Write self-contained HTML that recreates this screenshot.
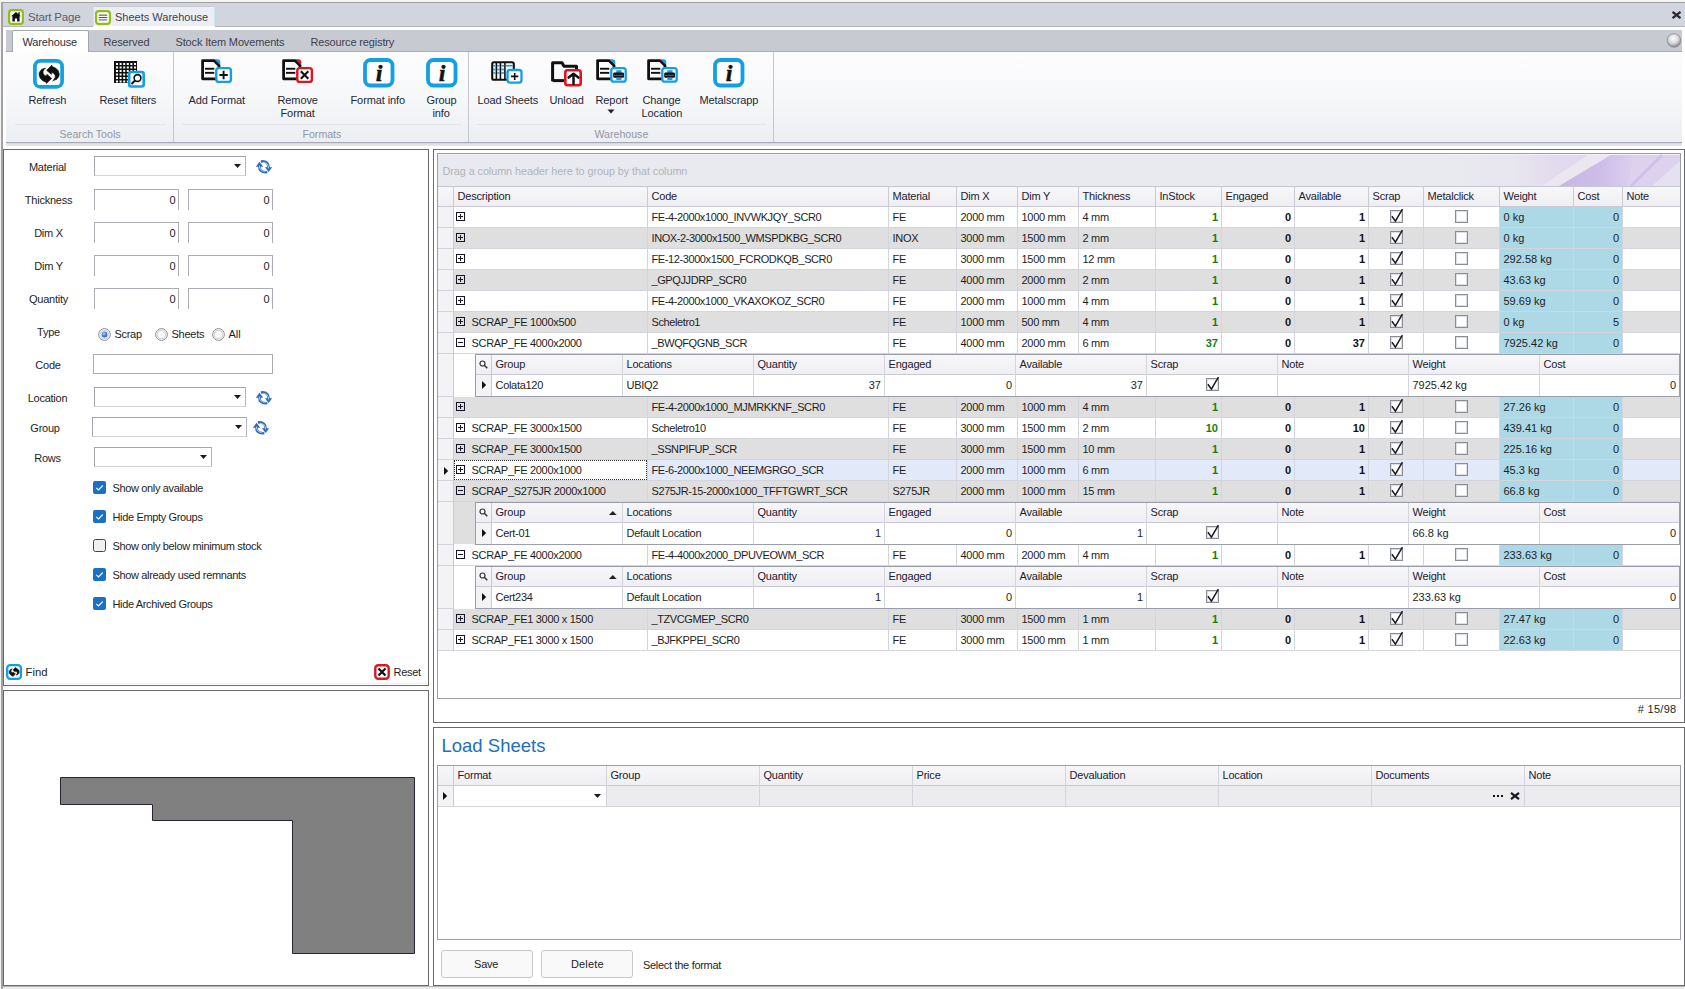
<!DOCTYPE html>
<html><head><meta charset="utf-8"><title>Sheets Warehouse</title>
<style>
html,body{margin:0;padding:0;}
body{width:1685px;height:989px;position:relative;overflow:hidden;background:#fff;font-family:"Liberation Sans",sans-serif;}
.r{position:absolute;}
.t{position:absolute;white-space:pre;}
svg.r{overflow:visible;}
</style></head><body>
<div class="r" style="left:0px;top:0px;width:1685px;height:989px;background:#ffffff;"></div>
<div class="r" style="left:0px;top:0px;width:1685px;height:2px;background:#f4f4f4;"></div>
<div class="r" style="left:0px;top:0px;width:2px;height:989px;background:#f4f4f4;"></div>
<div class="r" style="left:1px;top:2px;width:1685px;height:1px;background:#a0a0a0;"></div>
<div class="r" style="left:2px;top:2px;width:1px;height:988px;background:#a0a0a0;"></div>
<div class="r" style="left:1px;top:2px;width:1px;height:988px;background:#a4a4a4;"></div>
<div class="r" style="left:3px;top:3px;width:1682px;height:23px;background:#d2d5dd;"></div>
<div class="r" style="left:3px;top:26px;width:90px;height:1px;background:#b3b6c0;"></div>
<div class="r" style="left:215px;top:26px;width:1471px;height:1px;background:#b3b6c0;"></div>
<svg class="r" style="left:8px;top:9px;" width="16" height="16" viewBox="0 0 16 16"><rect x="1.1" y="1.1" width="13.8" height="13.8" rx="2.6" fill="#fff" stroke="#90be12" stroke-width="2.2"/><path d="M3.1 7.2 L8 3 L12.9 7.2 Z" fill="#111"/><path d="M4.4 6.5 L11.6 6.5 L11.6 12.4 L9.1 12.4 L9.1 9.6 L6.9 9.6 L6.9 12.4 L4.4 12.4 Z" fill="#111"/><rect x="10.3" y="3.2" width="1.4" height="2.8" fill="#111"/></svg>
<div class="t" style="left:28px;top:10.59px;font-size:11.5px;line-height:13.213px;color:#5a5e68;letter-spacing:-0.2px;">Start Page</div>
<div class="r" style="left:93px;top:6px;width:122px;height:20px;background:#eceef3;border-top:1px solid #c9cdd6;border-left:1px solid #bfe8f0;border-right:1px solid #bfe8f0;box-sizing:border-box;border-radius:2px 2px 0 0;"></div>
<svg class="r" style="left:95px;top:10px;" width="16" height="15" viewBox="0 0 16 15"><rect x="1.1" y="1.1" width="13.8" height="12.8" rx="2.6" fill="#fff" stroke="#90be12" stroke-width="2.2"/><rect x="3.8" y="4.6" width="8.4" height="1.1" fill="#555"/><rect x="3.8" y="7" width="8.4" height="1.1" fill="#555"/><rect x="3.8" y="9.4" width="8.4" height="1.1" fill="#666"/></svg>
<div class="t" style="left:115px;top:11.04px;font-size:11px;line-height:12.639px;color:#3c4250;">Sheets Warehouse</div>
<svg class="r" style="left:1671px;top:11px;" width="11" height="8" viewBox="0 0 11 8"><path d="M1.5 0.8 L9.5 7.2 M9.5 0.8 L1.5 7.2" stroke="#2e2630" stroke-width="2.3"/></svg>
<div class="r" style="left:6px;top:30px;width:1676px;height:21px;background:#c8cad2;"></div>
<div class="r" style="left:6px;top:51px;width:1676px;height:1px;background:#a9acb6;"></div>
<div class="r" style="left:12px;top:30px;width:77px;height:22px;background:#ffffff;border-radius:2px 2px 0 0;border:1px solid #a2a6b2;border-bottom:none;box-sizing:border-box;"></div>
<div class="t" style="left:22.5px;top:36.05px;font-size:11px;line-height:12.639px;color:#2b3040;letter-spacing:-0.15px;">Warehouse</div>
<div class="t" style="left:103.5px;top:36.05px;font-size:11px;line-height:12.639px;color:#3b4150;letter-spacing:-0.15px;">Reserved</div>
<div class="t" style="left:175.5px;top:36.05px;font-size:11px;line-height:12.639px;color:#3b4150;letter-spacing:-0.15px;">Stock Item Movements</div>
<div class="t" style="left:310.5px;top:36.05px;font-size:11px;line-height:12.639px;color:#3b4150;letter-spacing:-0.15px;">Resource registry</div>
<svg class="r" style="left:1666px;top:33px;" width="16" height="15" viewBox="0 0 16 15"><defs><radialGradient id="bg1" cx="45%" cy="35%" r="60%"><stop offset="0" stop-color="#ffffff"/><stop offset="0.6" stop-color="#d8d8dc"/><stop offset="1" stop-color="#8e8e96"/></radialGradient></defs><circle cx="8" cy="7.5" r="6.8" fill="url(#bg1)" stroke="#8a8a92" stroke-width="0.8"/></svg>
<div class="r" style="left:6px;top:52px;width:1676px;height:90px;background:linear-gradient(#fdfdfe,#f6f7f9 55%,#eceef2);"></div>
<div class="r" style="left:6px;top:142px;width:1676px;height:1px;background:#a6aab6;"></div>
<div class="r" style="left:6px;top:143px;width:1676px;height:3px;background:linear-gradient(#d6d7dc,#eaebef);"></div>
<div class="r" style="left:173px;top:52px;width:1px;height:90px;background:#c4c7cf;"></div>
<div class="r" style="left:468px;top:52px;width:1px;height:90px;background:#c4c7cf;"></div>
<div class="r" style="left:773px;top:52px;width:1px;height:90px;background:#c4c7cf;"></div>
<div class="r" style="left:15px;top:124px;width:151px;height:1px;background:#e2e4ea;"></div>
<div class="r" style="left:182px;top:124px;width:279px;height:1px;background:#e2e4ea;"></div>
<div class="r" style="left:477px;top:124px;width:289px;height:1px;background:#e2e4ea;"></div>
<div class="t" style="left:59.5px;top:128.41px;font-size:10.6px;line-height:12.179px;color:#9096a4;">Search Tools</div>
<div class="t" style="left:302.5px;top:128.41px;font-size:10.6px;line-height:12.179px;color:#9096a4;">Formats</div>
<div class="t" style="left:594.5px;top:128.41px;font-size:10.6px;line-height:12.179px;color:#9096a4;">Warehouse</div>
<div class="t" style="left:28.5px;top:94.05px;font-size:11px;line-height:12.639px;color:#222838;letter-spacing:-0.1px;">Refresh</div>
<div class="t" style="left:99.5px;top:94.05px;font-size:11px;line-height:12.639px;color:#222838;letter-spacing:-0.1px;">Reset filters</div>
<div class="t" style="left:188.5px;top:94.05px;font-size:11px;line-height:12.639px;color:#222838;letter-spacing:-0.1px;">Add Format</div>
<div class="t" style="left:277.5px;top:94.05px;font-size:11px;line-height:12.639px;color:#222838;letter-spacing:-0.1px;">Remove</div>
<div class="t" style="left:280.5px;top:107.05px;font-size:11px;line-height:12.639px;color:#222838;letter-spacing:-0.1px;">Format</div>
<div class="t" style="left:350.5px;top:94.05px;font-size:11px;line-height:12.639px;color:#222838;letter-spacing:-0.1px;">Format info</div>
<div class="t" style="left:426.5px;top:94.05px;font-size:11px;line-height:12.639px;color:#222838;letter-spacing:-0.1px;">Group</div>
<div class="t" style="left:432.5px;top:107.05px;font-size:11px;line-height:12.639px;color:#222838;letter-spacing:-0.1px;">info</div>
<div class="t" style="left:477.5px;top:94.05px;font-size:11px;line-height:12.639px;color:#222838;letter-spacing:-0.1px;">Load Sheets</div>
<div class="t" style="left:549.5px;top:94.05px;font-size:11px;line-height:12.639px;color:#222838;letter-spacing:-0.1px;">Unload</div>
<div class="t" style="left:595.5px;top:94.05px;font-size:11px;line-height:12.639px;color:#222838;letter-spacing:-0.1px;">Report</div>
<svg class="r" style="left:607px;top:109px;" width="8" height="5" viewBox="0 0 8 5"><path d="M0.5 0.5 L7.5 0.5 L4 4.5 Z" fill="#222"/></svg>
<div class="t" style="left:642.5px;top:94.05px;font-size:11px;line-height:12.639px;color:#222838;letter-spacing:-0.1px;">Change</div>
<div class="t" style="left:641.5px;top:107.05px;font-size:11px;line-height:12.639px;color:#222838;letter-spacing:-0.1px;">Location</div>
<div class="t" style="left:699.5px;top:94.05px;font-size:11px;line-height:12.639px;color:#222838;letter-spacing:-0.1px;">Metalscrapp</div>
<svg class="r" style="left:33px;top:59px;" width="32" height="31" viewBox="0 0 32 31"><rect x="1.9" y="1.9" width="27.2" height="26" rx="5.5" fill="#fff" stroke="#12a0e3" stroke-width="3.7"/><path d="M12.6 9.0 L8.7 10.3 L6.4 13.2 L6.0 15.8 L7.1 19.1 L9.7 21.7 L13.2 23.3 L13.4 24.6 L18.7 19.4 L13.9 15.2 L13.6 17.1 L11.6 16.5 L10.2 14.5 L10.0 12.6 L11.3 10.3 Z" fill="#111" stroke="#111" stroke-width="0.6" stroke-linejoin="round"/><path d="M12.6 9.0 L8.7 10.3 L6.4 13.2 L6.0 15.8 L7.1 19.1 L9.7 21.7 L13.2 23.3 L13.4 24.6 L18.7 19.4 L13.9 15.2 L13.6 17.1 L11.6 16.5 L10.2 14.5 L10.0 12.6 L11.3 10.3 Z" transform="rotate(180 16.15 15.35)" fill="#111" stroke="#111" stroke-width="0.6" stroke-linejoin="round"/></svg>
<svg class="r" style="left:114px;top:61px;" width="32" height="28" viewBox="0 0 32 28"><rect x="0" y="0" width="23" height="22" fill="#111"/><rect x="2.0" y="2.0" width="2" height="2" fill="#fff"/><rect x="2.0" y="5.5" width="2" height="2" fill="#fff"/><rect x="2.0" y="9.0" width="2" height="2" fill="#fff"/><rect x="2.0" y="12.5" width="2" height="2" fill="#fff"/><rect x="2.0" y="16.0" width="2" height="2" fill="#fff"/><rect x="2.0" y="19.5" width="2" height="2" fill="#fff"/><rect x="5.6" y="2.0" width="2" height="2" fill="#fff"/><rect x="5.6" y="5.5" width="2" height="2" fill="#fff"/><rect x="5.6" y="9.0" width="2" height="2" fill="#fff"/><rect x="5.6" y="12.5" width="2" height="2" fill="#fff"/><rect x="5.6" y="16.0" width="2" height="2" fill="#fff"/><rect x="5.6" y="19.5" width="2" height="2" fill="#fff"/><rect x="9.2" y="2.0" width="2" height="2" fill="#fff"/><rect x="9.2" y="5.5" width="2" height="2" fill="#fff"/><rect x="9.2" y="9.0" width="2" height="2" fill="#fff"/><rect x="9.2" y="12.5" width="2" height="2" fill="#fff"/><rect x="9.2" y="16.0" width="2" height="2" fill="#fff"/><rect x="9.2" y="19.5" width="2" height="2" fill="#fff"/><rect x="12.8" y="2.0" width="2" height="2" fill="#fff"/><rect x="12.8" y="5.5" width="2" height="2" fill="#fff"/><rect x="12.8" y="9.0" width="2" height="2" fill="#fff"/><rect x="12.8" y="12.5" width="2" height="2" fill="#fff"/><rect x="12.8" y="16.0" width="2" height="2" fill="#fff"/><rect x="12.8" y="19.5" width="2" height="2" fill="#fff"/><rect x="16.4" y="2.0" width="2" height="2" fill="#fff"/><rect x="16.4" y="5.5" width="2" height="2" fill="#fff"/><rect x="16.4" y="9.0" width="2" height="2" fill="#fff"/><rect x="16.4" y="12.5" width="2" height="2" fill="#fff"/><rect x="16.4" y="16.0" width="2" height="2" fill="#fff"/><rect x="16.4" y="19.5" width="2" height="2" fill="#fff"/><rect x="20.0" y="2.0" width="2" height="2" fill="#fff"/><rect x="20.0" y="5.5" width="2" height="2" fill="#fff"/><rect x="20.0" y="9.0" width="2" height="2" fill="#fff"/><rect x="20.0" y="12.5" width="2" height="2" fill="#fff"/><rect x="20.0" y="16.0" width="2" height="2" fill="#fff"/><rect x="20.0" y="19.5" width="2" height="2" fill="#fff"/><rect x="15.2" y="11" width="14.5" height="14.5" rx="2" fill="#fff" stroke="#12a0e3" stroke-width="2.6"/><circle cx="23.5" cy="17" r="3.4" fill="none" stroke="#111" stroke-width="1.6"/><path d="M21 19.5 L17.5 23" stroke="#111" stroke-width="2"/></svg>
<svg class="r" style="left:200px;top:58px;" width="33" height="26" viewBox="0 0 33 26"><path d="M2.6 2.6 L14 2.6 L19 7.6 L19 11 M2.6 2.6 L2.6 20.8 L16 20.8" fill="none" stroke="#111" stroke-width="2.8" stroke-linejoin="round" stroke-linecap="round"/><rect x="5" y="9.8" width="9.3" height="1.9" fill="#111"/><rect x="5" y="13.9" width="9.3" height="1.9" fill="#111"/><path d="M14.3 1.2 L17.5 1.2 Q20.2 1.4 20.3 4.2 L20.3 6.8 Z" fill="#12a0e3"/><rect x="16.3" y="10.1" width="14.6" height="13.8" rx="2.5" fill="#fff" stroke="#12a0e3" stroke-width="2.4"/><path d="M23.6 12.8 L23.6 21.2 M19.4 17 L27.8 17" stroke="#111" stroke-width="1.9"/></svg>
<svg class="r" style="left:281px;top:58px;" width="33" height="26" viewBox="0 0 33 26"><path d="M2.6 2.6 L14 2.6 L19 7.6 L19 11 M2.6 2.6 L2.6 20.8 L16 20.8" fill="none" stroke="#111" stroke-width="2.8" stroke-linejoin="round" stroke-linecap="round"/><rect x="5" y="9.8" width="9.3" height="1.9" fill="#111"/><rect x="5" y="13.9" width="9.3" height="1.9" fill="#111"/><path d="M14.3 1.2 L17.5 1.2 Q20.2 1.4 20.3 4.2 L20.3 6.8 Z" fill="#e0141e"/><rect x="16.3" y="10.1" width="14.6" height="13.8" rx="2.5" fill="#fff" stroke="#e0141e" stroke-width="2.4"/><path d="M19.8 13.3 L27.3 20.8 M27.3 13.3 L19.8 20.8" stroke="#111" stroke-width="2.1"/></svg>
<svg class="r" style="left:363px;top:58px;" width="32" height="30" viewBox="0 0 32 30"><rect x="2" y="2" width="27.5" height="25.5" rx="5.5" fill="#fff" stroke="#12a0e3" stroke-width="3.8"/><text x="16.2" y="22.8" text-anchor="middle" font-family="Liberation Serif" font-weight="bold" font-style="italic" font-size="22.5" fill="#111" stroke="#111" stroke-width="0.7">i</text></svg>
<svg class="r" style="left:426px;top:58px;" width="32" height="30" viewBox="0 0 32 30"><rect x="2" y="2" width="27.5" height="25.5" rx="5.5" fill="#fff" stroke="#12a0e3" stroke-width="3.8"/><text x="16.2" y="22.8" text-anchor="middle" font-family="Liberation Serif" font-weight="bold" font-style="italic" font-size="22.5" fill="#111" stroke="#111" stroke-width="0.7">i</text></svg>
<svg class="r" style="left:713px;top:58px;" width="32" height="30" viewBox="0 0 32 30"><rect x="2" y="2" width="27.5" height="25.5" rx="5.5" fill="#fff" stroke="#12a0e3" stroke-width="3.8"/><text x="16.2" y="22.8" text-anchor="middle" font-family="Liberation Serif" font-weight="bold" font-style="italic" font-size="22.5" fill="#111" stroke="#111" stroke-width="0.7">i</text></svg>
<svg class="r" style="left:491px;top:61px;" width="33" height="24" viewBox="0 0 33 24"><rect x="1.2" y="1.2" width="21.6" height="17.6" rx="1.8" fill="#fff" stroke="#111" stroke-width="2.1"/><rect x="4.6" y="1.5" width="1.6" height="17" fill="#111"/><rect x="8.6" y="1.5" width="1.6" height="17" fill="#111"/><rect x="13.1" y="1.5" width="1.6" height="17" fill="#111"/><rect x="2.2" y="3.9" width="2.4" height="1.6" fill="#1b9be0"/><rect x="6.2" y="3.9" width="2.4" height="1.6" fill="#1b9be0"/><rect x="10.2" y="3.9" width="2.9" height="1.6" fill="#1b9be0"/><rect x="2.2" y="7.7" width="2.4" height="1.6" fill="#1b9be0"/><rect x="6.2" y="7.7" width="2.4" height="1.6" fill="#1b9be0"/><rect x="10.2" y="7.7" width="2.9" height="1.6" fill="#1b9be0"/><rect x="2.2" y="11.2" width="2.4" height="1.6" fill="#1b9be0"/><rect x="6.2" y="11.2" width="2.4" height="1.6" fill="#1b9be0"/><rect x="10.2" y="11.2" width="2.9" height="1.6" fill="#1b9be0"/><rect x="14.7" y="3.9" width="7" height="1.6" fill="#1b9be0"/><rect x="16.5" y="9" width="14" height="12.6" rx="2.5" fill="#fff" stroke="#12a0e3" stroke-width="2.3"/><path d="M23.7 11.9 L23.7 19 M20 15.4 L27.4 15.4" stroke="#111" stroke-width="1.6"/></svg>
<svg class="r" style="left:550px;top:60px;" width="33" height="28" viewBox="0 0 33 28"><path d="M2.6 21.2 L2.6 2.7 L12 2.7 L14 6.3 L26.5 6.3 L26.5 10" fill="none" stroke="#111" stroke-width="3" stroke-linejoin="round"/><path d="M2.6 20.6 L15 20.6" stroke="#111" stroke-width="3"/><rect x="15.3" y="10.3" width="15.4" height="14.9" rx="2.2" fill="#fff" stroke="#e0141e" stroke-width="2.6"/><path d="M23.5 23.8 L23.5 14.5 M18.6 17.6 L23.5 13.8 L28.4 17.6" fill="none" stroke="#111" stroke-width="2.5" stroke-linecap="round" stroke-linejoin="round"/></svg>
<svg class="r" style="left:595px;top:58px;" width="33" height="26" viewBox="0 0 33 26"><path d="M2.6 2.6 L14 2.6 L19 7.6 L19 11 M2.6 2.6 L2.6 20.8 L16 20.8" fill="none" stroke="#111" stroke-width="2.8" stroke-linejoin="round" stroke-linecap="round"/><rect x="5" y="9.8" width="9.3" height="1.9" fill="#111"/><rect x="5" y="13.9" width="9.3" height="1.9" fill="#111"/><path d="M14.3 1.2 L17.5 1.2 Q20.2 1.4 20.3 4.2 L20.3 6.8 Z" fill="#12a0e3"/><rect x="16.3" y="10.1" width="14.4" height="13.6" rx="2.5" fill="#fff" stroke="#12a0e3" stroke-width="2.3"/><rect x="21.3" y="12.2" width="5.2" height="3.6" fill="#1b9be0"/><rect x="18.2" y="14.6" width="10.8" height="5.2" rx="1.2" fill="#111"/><rect x="19" y="16.9" width="9.2" height="0.8" fill="#777"/><rect x="21.3" y="19.6" width="5.2" height="2.4" fill="#1b9be0"/></svg>
<svg class="r" style="left:646px;top:58px;" width="33" height="26" viewBox="0 0 33 26"><path d="M2.6 2.6 L14 2.6 L19 7.6 L19 11 M2.6 2.6 L2.6 20.8 L16 20.8" fill="none" stroke="#111" stroke-width="2.8" stroke-linejoin="round" stroke-linecap="round"/><rect x="5" y="9.8" width="9.3" height="1.9" fill="#111"/><rect x="5" y="13.9" width="9.3" height="1.9" fill="#111"/><path d="M14.3 1.2 L17.5 1.2 Q20.2 1.4 20.3 4.2 L20.3 6.8 Z" fill="#12a0e3"/><rect x="16.3" y="10.1" width="14.4" height="13.6" rx="2.5" fill="#fff" stroke="#12a0e3" stroke-width="2.3"/><rect x="21.3" y="12.2" width="5.2" height="3.6" fill="#1b9be0"/><rect x="18.2" y="14.6" width="10.8" height="5.2" rx="1.2" fill="#111"/><rect x="19" y="16.9" width="9.2" height="0.8" fill="#777"/><rect x="21.3" y="19.6" width="5.2" height="2.4" fill="#1b9be0"/></svg>
<div class="r" style="left:3px;top:149px;width:426px;height:537px;background:#ffffff;border:1px solid #6a6a6a;box-sizing:border-box;"></div>
<div class="t" style="left:-152.5px;width:400px;text-align:center;top:161.04px;font-size:11px;line-height:12.639px;color:#1e1e1e;letter-spacing:-0.25px;">Material</div>
<div class="r" style="left:94px;top:156px;width:152px;height:20px;background:#fff;border:1px solid;border-color:#a3a6b0 #b4b7c0 #d2d4da #a3a6b0;box-sizing:border-box;"></div>
<svg class="r" style="left:234px;top:164px;" width="7" height="4" viewBox="0 0 7 4"><path d="M0 0 L7 0 L3.5 4 Z" fill="#1a1a1a"/></svg>
<svg class="r" style="left:255px;top:160px;" width="18" height="14" viewBox="0 0 18 14"><path d="M4.4 6.2 Q4.2 12.4 11.2 12.2" fill="none" stroke="#2f68c4" stroke-width="2.6" stroke-linecap="round"/><path d="M13.6 7.6 Q13.8 1.3 7 1.4" fill="none" stroke="#2f68c4" stroke-width="2.6" stroke-linecap="round"/><path d="M4.5 1.8 L0.8 6.8 L8.2 6.8 Z" fill="#2f68c4"/><path d="M13.6 12 L10 7.2 L17.2 7.2 Z" fill="#2f68c4"/><path d="M4.4 5.5 Q4.3 11.3 10.5 11.4" fill="none" stroke="#a6def7" stroke-width="0.9"/><path d="M13.6 8.5 Q13.7 2.3 7.5 2.3" fill="none" stroke="#a6def7" stroke-width="0.9"/></svg>
<div class="t" style="left:-151.5px;width:400px;text-align:center;top:193.54px;font-size:11px;line-height:12.639px;color:#1e1e1e;letter-spacing:-0.25px;">Thickness</div>
<div class="r" style="left:94px;top:189px;width:85px;height:21px;background:#fff;border:1px solid #abadb3;border-bottom:none;box-sizing:border-box;"></div>
<div class="t" style="left:-225px;width:400px;text-align:right;top:194.04px;font-size:11px;line-height:12.639px;color:#1e1e1e;letter-spacing:-0.5px;">0</div>
<div class="r" style="left:188px;top:189px;width:85px;height:21px;background:#fff;border:1px solid #abadb3;border-bottom:none;box-sizing:border-box;"></div>
<div class="t" style="left:-131px;width:400px;text-align:right;top:194.04px;font-size:11px;line-height:12.639px;color:#1e1e1e;letter-spacing:-0.5px;">0</div>
<div class="t" style="left:-151.5px;width:400px;text-align:center;top:226.54px;font-size:11px;line-height:12.639px;color:#1e1e1e;letter-spacing:-0.25px;">Dim X</div>
<div class="r" style="left:94px;top:222px;width:85px;height:21px;background:#fff;border:1px solid #abadb3;border-bottom:none;box-sizing:border-box;"></div>
<div class="t" style="left:-225px;width:400px;text-align:right;top:227.04px;font-size:11px;line-height:12.639px;color:#1e1e1e;letter-spacing:-0.5px;">0</div>
<div class="r" style="left:188px;top:222px;width:85px;height:21px;background:#fff;border:1px solid #abadb3;border-bottom:none;box-sizing:border-box;"></div>
<div class="t" style="left:-131px;width:400px;text-align:right;top:227.04px;font-size:11px;line-height:12.639px;color:#1e1e1e;letter-spacing:-0.5px;">0</div>
<div class="t" style="left:-151.5px;width:400px;text-align:center;top:259.55px;font-size:11px;line-height:12.639px;color:#1e1e1e;letter-spacing:-0.25px;">Dim Y</div>
<div class="r" style="left:94px;top:255px;width:85px;height:21px;background:#fff;border:1px solid #abadb3;border-bottom:none;box-sizing:border-box;"></div>
<div class="t" style="left:-225px;width:400px;text-align:right;top:260.05px;font-size:11px;line-height:12.639px;color:#1e1e1e;letter-spacing:-0.5px;">0</div>
<div class="r" style="left:188px;top:255px;width:85px;height:21px;background:#fff;border:1px solid #abadb3;border-bottom:none;box-sizing:border-box;"></div>
<div class="t" style="left:-131px;width:400px;text-align:right;top:260.05px;font-size:11px;line-height:12.639px;color:#1e1e1e;letter-spacing:-0.5px;">0</div>
<div class="t" style="left:-151.5px;width:400px;text-align:center;top:292.55px;font-size:11px;line-height:12.639px;color:#1e1e1e;letter-spacing:-0.25px;">Quantity</div>
<div class="r" style="left:94px;top:288px;width:85px;height:21px;background:#fff;border:1px solid #abadb3;border-bottom:none;box-sizing:border-box;"></div>
<div class="t" style="left:-225px;width:400px;text-align:right;top:293.05px;font-size:11px;line-height:12.639px;color:#1e1e1e;letter-spacing:-0.5px;">0</div>
<div class="r" style="left:188px;top:288px;width:85px;height:21px;background:#fff;border:1px solid #abadb3;border-bottom:none;box-sizing:border-box;"></div>
<div class="t" style="left:-131px;width:400px;text-align:right;top:293.05px;font-size:11px;line-height:12.639px;color:#1e1e1e;letter-spacing:-0.5px;">0</div>
<div class="t" style="left:-151.5px;width:400px;text-align:center;top:326.05px;font-size:11px;line-height:12.639px;color:#1e1e1e;letter-spacing:-0.25px;">Type</div>
<svg class="r" style="left:97.5px;top:328.0px;" width="13" height="13" viewBox="0 0 13 13"><defs><radialGradient id="rdot" cx="40%" cy="35%" r="70%"><stop offset="0" stop-color="#b8d4f4"/><stop offset="0.5" stop-color="#4f86d6"/><stop offset="1" stop-color="#2d5eb4"/></radialGradient></defs><circle cx="6.5" cy="6.5" r="5.9" fill="#fdfdfd" stroke="#8c8e92" stroke-width="1"/><circle cx="6.5" cy="6.5" r="4.2" fill="none" stroke="#d4d5d8" stroke-width="1.2"/><circle cx="6.5" cy="6.5" r="2.9" fill="url(#rdot)"/></svg>
<div class="t" style="left:114.5px;top:327.55px;font-size:11px;line-height:12.639px;color:#1e1e1e;letter-spacing:-0.3px;">Scrap</div>
<svg class="r" style="left:154.5px;top:328.0px;" width="13" height="13" viewBox="0 0 13 13"><defs><radialGradient id="rdot" cx="40%" cy="35%" r="70%"><stop offset="0" stop-color="#b8d4f4"/><stop offset="0.5" stop-color="#4f86d6"/><stop offset="1" stop-color="#2d5eb4"/></radialGradient></defs><circle cx="6.5" cy="6.5" r="5.9" fill="#fdfdfd" stroke="#8c8e92" stroke-width="1"/><circle cx="6.5" cy="6.5" r="4.2" fill="none" stroke="#d4d5d8" stroke-width="1.2"/></svg>
<div class="t" style="left:171.5px;top:327.55px;font-size:11px;line-height:12.639px;color:#1e1e1e;letter-spacing:-0.25px;">Sheets</div>
<svg class="r" style="left:211.5px;top:328.0px;" width="13" height="13" viewBox="0 0 13 13"><defs><radialGradient id="rdot" cx="40%" cy="35%" r="70%"><stop offset="0" stop-color="#b8d4f4"/><stop offset="0.5" stop-color="#4f86d6"/><stop offset="1" stop-color="#2d5eb4"/></radialGradient></defs><circle cx="6.5" cy="6.5" r="5.9" fill="#fdfdfd" stroke="#8c8e92" stroke-width="1"/><circle cx="6.5" cy="6.5" r="4.2" fill="none" stroke="#d4d5d8" stroke-width="1.2"/></svg>
<div class="t" style="left:228.5px;top:327.55px;font-size:11px;line-height:12.639px;color:#1e1e1e;">All</div>
<div class="t" style="left:-152px;width:400px;text-align:center;top:359.05px;font-size:11px;line-height:12.639px;color:#1e1e1e;letter-spacing:-0.25px;">Code</div>
<div class="r" style="left:93px;top:354px;width:180px;height:20px;background:#fff;border:1px solid #abadb3;box-sizing:border-box;"></div>
<div class="t" style="left:-152.5px;width:400px;text-align:center;top:391.55px;font-size:11px;line-height:12.639px;color:#1e1e1e;letter-spacing:-0.25px;">Location</div>
<div class="r" style="left:94px;top:387px;width:152px;height:20px;background:#fff;border:1px solid;border-color:#a3a6b0 #b4b7c0 #d2d4da #a3a6b0;box-sizing:border-box;"></div>
<svg class="r" style="left:234px;top:395px;" width="7" height="4" viewBox="0 0 7 4"><path d="M0 0 L7 0 L3.5 4 Z" fill="#1a1a1a"/></svg>
<svg class="r" style="left:255px;top:391px;" width="18" height="14" viewBox="0 0 18 14"><path d="M4.4 6.2 Q4.2 12.4 11.2 12.2" fill="none" stroke="#2f68c4" stroke-width="2.6" stroke-linecap="round"/><path d="M13.6 7.6 Q13.8 1.3 7 1.4" fill="none" stroke="#2f68c4" stroke-width="2.6" stroke-linecap="round"/><path d="M4.5 1.8 L0.8 6.8 L8.2 6.8 Z" fill="#2f68c4"/><path d="M13.6 12 L10 7.2 L17.2 7.2 Z" fill="#2f68c4"/><path d="M4.4 5.5 Q4.3 11.3 10.5 11.4" fill="none" stroke="#a6def7" stroke-width="0.9"/><path d="M13.6 8.5 Q13.7 2.3 7.5 2.3" fill="none" stroke="#a6def7" stroke-width="0.9"/></svg>
<div class="t" style="left:-155px;width:400px;text-align:center;top:421.55px;font-size:11px;line-height:12.639px;color:#1e1e1e;letter-spacing:-0.25px;">Group</div>
<div class="r" style="left:92px;top:417px;width:155px;height:20px;background:#fff;border:1px solid;border-color:#a3a6b0 #b4b7c0 #d2d4da #a3a6b0;box-sizing:border-box;"></div>
<svg class="r" style="left:235px;top:425px;" width="7" height="4" viewBox="0 0 7 4"><path d="M0 0 L7 0 L3.5 4 Z" fill="#1a1a1a"/></svg>
<svg class="r" style="left:252px;top:421px;" width="18" height="14" viewBox="0 0 18 14"><path d="M4.4 6.2 Q4.2 12.4 11.2 12.2" fill="none" stroke="#2f68c4" stroke-width="2.6" stroke-linecap="round"/><path d="M13.6 7.6 Q13.8 1.3 7 1.4" fill="none" stroke="#2f68c4" stroke-width="2.6" stroke-linecap="round"/><path d="M4.5 1.8 L0.8 6.8 L8.2 6.8 Z" fill="#2f68c4"/><path d="M13.6 12 L10 7.2 L17.2 7.2 Z" fill="#2f68c4"/><path d="M4.4 5.5 Q4.3 11.3 10.5 11.4" fill="none" stroke="#a6def7" stroke-width="0.9"/><path d="M13.6 8.5 Q13.7 2.3 7.5 2.3" fill="none" stroke="#a6def7" stroke-width="0.9"/></svg>
<div class="t" style="left:-152.5px;width:400px;text-align:center;top:451.55px;font-size:11px;line-height:12.639px;color:#1e1e1e;letter-spacing:-0.25px;">Rows</div>
<div class="r" style="left:94px;top:447px;width:118px;height:20px;background:#fff;border:1px solid;border-color:#a3a6b0 #b4b7c0 #d2d4da #a3a6b0;box-sizing:border-box;"></div>
<svg class="r" style="left:200px;top:455px;" width="7" height="4" viewBox="0 0 7 4"><path d="M0 0 L7 0 L3.5 4 Z" fill="#1a1a1a"/></svg>
<svg class="r" style="left:93px;top:481px;" width="13" height="13" viewBox="0 0 13 13"><rect x="0" y="0" width="13" height="13" rx="2" fill="#1a6fc9"/><path d="M3.3 6.8 L5.5 9 L9.8 4.5" fill="none" stroke="#fff" stroke-width="1.1"/></svg>
<div class="t" style="left:112.5px;top:481.55px;font-size:11px;line-height:12.639px;color:#1e1e1e;letter-spacing:-0.35px;">Show only available</div>
<svg class="r" style="left:93px;top:510px;" width="13" height="13" viewBox="0 0 13 13"><rect x="0" y="0" width="13" height="13" rx="2" fill="#1a6fc9"/><path d="M3.3 6.8 L5.5 9 L9.8 4.5" fill="none" stroke="#fff" stroke-width="1.1"/></svg>
<div class="t" style="left:112.5px;top:510.55px;font-size:11px;line-height:12.639px;color:#1e1e1e;letter-spacing:-0.35px;">Hide Empty Groups</div>
<svg class="r" style="left:93px;top:539px;" width="13" height="13" viewBox="0 0 13 13"><rect x="0.5" y="0.5" width="12" height="12" rx="2" fill="#f0f0f0" stroke="#444" stroke-width="1"/></svg>
<div class="t" style="left:112.5px;top:539.54px;font-size:11px;line-height:12.639px;color:#1e1e1e;letter-spacing:-0.35px;">Show only below minimum stock</div>
<svg class="r" style="left:93px;top:568px;" width="13" height="13" viewBox="0 0 13 13"><rect x="0" y="0" width="13" height="13" rx="2" fill="#1a6fc9"/><path d="M3.3 6.8 L5.5 9 L9.8 4.5" fill="none" stroke="#fff" stroke-width="1.1"/></svg>
<div class="t" style="left:112.5px;top:568.54px;font-size:11px;line-height:12.639px;color:#1e1e1e;letter-spacing:-0.35px;">Show already used remnants</div>
<svg class="r" style="left:93px;top:597px;" width="13" height="13" viewBox="0 0 13 13"><rect x="0" y="0" width="13" height="13" rx="2" fill="#1a6fc9"/><path d="M3.3 6.8 L5.5 9 L9.8 4.5" fill="none" stroke="#fff" stroke-width="1.1"/></svg>
<div class="t" style="left:112.5px;top:597.54px;font-size:11px;line-height:12.639px;color:#1e1e1e;letter-spacing:-0.35px;">Hide Archived Groups</div>
<div class="r" style="left:5px;top:683px;width:422px;height:1px;background:#f0f0f3;"></div>
<svg class="r" style="left:6px;top:664px;" width="17" height="17" viewBox="0 0 17 17"><rect x="1.2" y="1.2" width="13.8" height="13.6" rx="3" fill="#fff" stroke="#12a0e3" stroke-width="2.3"/><g transform="translate(0.1 0.3) scale(0.5)"><path d="M12.6 9.0 L8.7 10.3 L6.4 13.2 L6.0 15.8 L7.1 19.1 L9.7 21.7 L13.2 23.3 L13.4 24.6 L18.7 19.4 L13.9 15.2 L13.6 17.1 L11.6 16.5 L10.2 14.5 L10.0 12.6 L11.3 10.3 Z" fill="#111" stroke="#111" stroke-width="1"/><path d="M12.6 9.0 L8.7 10.3 L6.4 13.2 L6.0 15.8 L7.1 19.1 L9.7 21.7 L13.2 23.3 L13.4 24.6 L18.7 19.4 L13.9 15.2 L13.6 17.1 L11.6 16.5 L10.2 14.5 L10.0 12.6 L11.3 10.3 Z" transform="rotate(180 16.15 15.35)" fill="#111" stroke="#111" stroke-width="1"/></g></svg>
<div class="t" style="left:25.5px;top:665.77px;font-size:11.3px;line-height:12.984px;color:#1e1e1e;">Find</div>
<svg class="r" style="left:374px;top:664px;" width="16" height="16" viewBox="0 0 16 16"><rect x="1.3" y="1.3" width="13.4" height="13.4" rx="3" fill="#fff" stroke="#e0141e" stroke-width="2.4"/><path d="M4.5 4.5 L11.5 11.5 M11.5 4.5 L4.5 11.5" stroke="#111" stroke-width="2.2"/></svg>
<div class="t" style="left:393.5px;top:666.04px;font-size:11px;line-height:12.639px;color:#1e1e1e;letter-spacing:-0.3px;">Reset</div>
<div class="r" style="left:3px;top:690px;width:426px;height:296px;background:#ffffff;border:1px solid #6a6a6a;box-sizing:border-box;"></div>
<svg class="r" style="left:55px;top:770px;" width="370" height="190" viewBox="0 0 370 190"><path d="M5.5 7.5 L359.5 7.5 L359.5 183.5 L237.5 183.5 L237.5 50.5 L97.5 50.5 L97.5 34.5 L5.5 34.5 Z" fill="#808080" stroke="#2a2230" stroke-width="1"/></svg>
<div class="r" style="left:433px;top:149px;width:1252px;height:574px;background:#ffffff;border:1px solid #6a6a6a;border-right:1px solid #6a6a6a;box-sizing:border-box;"></div>
<div class="r" style="left:437px;top:153px;width:1244px;height:546px;background:#ffffff;border:1px solid #9a9eab;box-sizing:border-box;"></div>
<div class="r" style="left:438px;top:154px;width:1242px;height:32px;background:#e9eaef;"></div>
<div class="r" style="left:438px;top:154px;width:1242px;height:1px;background:#f3f3f6;"></div>
<svg class="r" style="left:1438px;top:155px;" width="242" height="31" viewBox="0 0 242 31"><defs><linearGradient id="sw0" x1="0" y1="0" x2="1" y2="0"><stop offset="0" stop-color="#e9eaef"/><stop offset="0.3" stop-color="#e8e6ef"/><stop offset="0.5" stop-color="#e2daee"/><stop offset="1" stop-color="#e0d6ee"/></linearGradient><linearGradient id="sw1" x1="0" y1="0" x2="1" y2="0"><stop offset="0" stop-color="#c8b6e6"/><stop offset="0.55" stop-color="#cdbde8"/><stop offset="1" stop-color="#dcd0ef"/></linearGradient></defs><rect x="0" y="0" width="242" height="31" fill="url(#sw0)"/><path d="M104 31 L121 31 L173 0 L150 0 Z" fill="#eae7f1"/><path d="M121 31 L190 31 L196 0 L173 0 Z" fill="url(#sw1)"/><path d="M190 31 L242 31 L242 0 L196 0 Z" fill="#ddd2ee"/><path d="M193 31 L224 0" stroke="#cfc1ea" stroke-width="3"/><path d="M214 31 L242 31 L242 6 Z" fill="#e6e1f0"/></svg>
<div class="t" style="left:442.5px;top:165.23px;font-size:10.8px;line-height:12.409px;color:#b0b3bb;letter-spacing:-0.05px;">Drag a column header here to group by that column</div>
<div class="r" style="left:438px;top:186px;width:1242px;height:1px;background:#c5c7d0;"></div>
<div class="r" style="left:438px;top:187px;width:1242px;height:19px;background:linear-gradient(#f7f7f9,#efeff3);"></div>
<div class="r" style="left:438px;top:206px;width:1242px;height:1px;background:#c9cad3;"></div>
<div class="r" style="left:453px;top:187px;width:1px;height:19px;background:#c9cad3;"></div>
<div class="r" style="left:647px;top:187px;width:1px;height:19px;background:#c9cad3;"></div>
<div class="r" style="left:888px;top:187px;width:1px;height:19px;background:#c9cad3;"></div>
<div class="r" style="left:956px;top:187px;width:1px;height:19px;background:#c9cad3;"></div>
<div class="r" style="left:1017px;top:187px;width:1px;height:19px;background:#c9cad3;"></div>
<div class="r" style="left:1078px;top:187px;width:1px;height:19px;background:#c9cad3;"></div>
<div class="r" style="left:1155px;top:187px;width:1px;height:19px;background:#c9cad3;"></div>
<div class="r" style="left:1221px;top:187px;width:1px;height:19px;background:#c9cad3;"></div>
<div class="r" style="left:1294px;top:187px;width:1px;height:19px;background:#c9cad3;"></div>
<div class="r" style="left:1368px;top:187px;width:1px;height:19px;background:#c9cad3;"></div>
<div class="r" style="left:1423px;top:187px;width:1px;height:19px;background:#c9cad3;"></div>
<div class="r" style="left:1499px;top:187px;width:1px;height:19px;background:#c9cad3;"></div>
<div class="r" style="left:1573px;top:187px;width:1px;height:19px;background:#c9cad3;"></div>
<div class="r" style="left:1622px;top:187px;width:1px;height:19px;background:#c9cad3;"></div>
<div class="t" style="left:457.5px;top:190.04px;font-size:11px;line-height:12.639px;color:#1e2030;letter-spacing:-0.2px;">Description</div>
<div class="t" style="left:651.5px;top:190.04px;font-size:11px;line-height:12.639px;color:#1e2030;letter-spacing:-0.2px;">Code</div>
<div class="t" style="left:892.5px;top:190.04px;font-size:11px;line-height:12.639px;color:#1e2030;letter-spacing:-0.2px;">Material</div>
<div class="t" style="left:960.5px;top:190.04px;font-size:11px;line-height:12.639px;color:#1e2030;letter-spacing:-0.2px;">Dim X</div>
<div class="t" style="left:1021.5px;top:190.04px;font-size:11px;line-height:12.639px;color:#1e2030;letter-spacing:-0.2px;">Dim Y</div>
<div class="t" style="left:1082.5px;top:190.04px;font-size:11px;line-height:12.639px;color:#1e2030;letter-spacing:-0.2px;">Thickness</div>
<div class="t" style="left:1159.5px;top:190.04px;font-size:11px;line-height:12.639px;color:#1e2030;letter-spacing:-0.2px;">InStock</div>
<div class="t" style="left:1225.5px;top:190.04px;font-size:11px;line-height:12.639px;color:#1e2030;letter-spacing:-0.2px;">Engaged</div>
<div class="t" style="left:1298.5px;top:190.04px;font-size:11px;line-height:12.639px;color:#1e2030;letter-spacing:-0.2px;">Available</div>
<div class="t" style="left:1372.5px;top:190.04px;font-size:11px;line-height:12.639px;color:#1e2030;letter-spacing:-0.2px;">Scrap</div>
<div class="t" style="left:1427.5px;top:190.04px;font-size:11px;line-height:12.639px;color:#1e2030;letter-spacing:-0.2px;">Metalclick</div>
<div class="t" style="left:1503.5px;top:190.04px;font-size:11px;line-height:12.639px;color:#1e2030;letter-spacing:-0.2px;">Weight</div>
<div class="t" style="left:1577.5px;top:190.04px;font-size:11px;line-height:12.639px;color:#1e2030;letter-spacing:-0.2px;">Cost</div>
<div class="t" style="left:1626.5px;top:190.04px;font-size:11px;line-height:12.639px;color:#1e2030;letter-spacing:-0.2px;">Note</div>
<div class="r" style="left:438px;top:207px;width:15px;height:20px;background:#f3f3f6;"></div>
<div class="r" style="left:438px;top:227px;width:15px;height:1px;background:#d4d5dc;"></div>
<div class="r" style="left:453px;top:207px;width:1px;height:21px;background:#c9cad3;"></div>
<div class="r" style="left:454px;top:207px;width:1226px;height:20px;background:#ffffff;"></div>
<div class="r" style="left:454px;top:227px;width:1226px;height:1px;background:#d4d5dc;"></div>
<div class="r" style="left:1500px;top:207px;width:73px;height:20px;background:#add8e6;"></div>
<div class="r" style="left:1574px;top:207px;width:48px;height:20px;background:#add8e6;"></div>
<div class="r" style="left:647px;top:207px;width:1px;height:20px;background:#d4d5dc;"></div>
<div class="r" style="left:888px;top:207px;width:1px;height:20px;background:#d4d5dc;"></div>
<div class="r" style="left:956px;top:207px;width:1px;height:20px;background:#d4d5dc;"></div>
<div class="r" style="left:1017px;top:207px;width:1px;height:20px;background:#d4d5dc;"></div>
<div class="r" style="left:1078px;top:207px;width:1px;height:20px;background:#d4d5dc;"></div>
<div class="r" style="left:1155px;top:207px;width:1px;height:20px;background:#d4d5dc;"></div>
<div class="r" style="left:1221px;top:207px;width:1px;height:20px;background:#d4d5dc;"></div>
<div class="r" style="left:1294px;top:207px;width:1px;height:20px;background:#d4d5dc;"></div>
<div class="r" style="left:1368px;top:207px;width:1px;height:20px;background:#d4d5dc;"></div>
<div class="r" style="left:1423px;top:207px;width:1px;height:20px;background:#d4d5dc;"></div>
<div class="r" style="left:1499px;top:207px;width:1px;height:20px;background:#d4d5dc;"></div>
<div class="r" style="left:1573px;top:207px;width:1px;height:20px;background:#d4d5dc;"></div>
<div class="r" style="left:1622px;top:207px;width:1px;height:20px;background:#d4d5dc;"></div>
<svg class="r" style="left:456px;top:212px;" width="9" height="9" viewBox="0 0 9 9"><rect x="0.5" y="0.5" width="8" height="8" fill="none" stroke="#151525" stroke-width="1"/><path d="M2 4.5 L7 4.5" stroke="#151525" stroke-width="1"/><path d="M4.5 2 L4.5 7" stroke="#151525" stroke-width="1"/></svg>
<div class="t" style="left:651.5px;top:211.04px;font-size:11px;line-height:12.639px;color:#1e1e1e;letter-spacing:-0.4px;">FE-4-2000x1000_INVWKJQY_SCR0</div>
<div class="t" style="left:892.5px;top:211.04px;font-size:11px;line-height:12.639px;color:#1e1e1e;letter-spacing:-0.3px;">FE</div>
<div class="t" style="left:960.5px;top:211.04px;font-size:11px;line-height:12.639px;color:#1e1e1e;letter-spacing:-0.3px;">2000 mm</div>
<div class="t" style="left:1021.5px;top:211.04px;font-size:11px;line-height:12.639px;color:#1e1e1e;letter-spacing:-0.3px;">1000 mm</div>
<div class="t" style="left:1082.5px;top:211.04px;font-size:11px;line-height:12.639px;color:#1e1e1e;letter-spacing:-0.3px;">4 mm</div>
<div class="t" style="left:818px;width:400px;text-align:right;top:211.04px;font-size:11px;line-height:12.639px;color:#108010;font-weight:bold;">1</div>
<div class="t" style="left:891px;width:400px;text-align:right;top:211.04px;font-size:11px;line-height:12.639px;color:#111;font-weight:bold;">0</div>
<div class="t" style="left:965px;width:400px;text-align:right;top:211.04px;font-size:11px;line-height:12.639px;color:#111;font-weight:bold;">1</div>
<svg class="r" style="left:1390px;top:210px;" width="13" height="13" viewBox="0 0 13 13"><rect x="0.5" y="0.5" width="12" height="12" fill="#fff" stroke="#8a8d96" stroke-width="1"/><rect x="1.5" y="1.5" width="10" height="10" fill="none" stroke="#dcdee5" stroke-width="1"/><path d="M1.9 6.3 L5.4 11.2 L12.4 -0.8" fill="none" stroke="#1a1622" stroke-width="1.5"/></svg>
<svg class="r" style="left:1455px;top:210px;" width="13" height="13" viewBox="0 0 13 13"><rect x="0.5" y="0.5" width="12" height="12" fill="#fff" stroke="#8a8d96" stroke-width="1"/><rect x="1.5" y="1.5" width="10" height="10" fill="none" stroke="#dcdee5" stroke-width="1"/></svg>
<div class="t" style="left:1503.5px;top:211.04px;font-size:11px;line-height:12.639px;color:#1e1e1e;letter-spacing:0px;">0 kg</div>
<div class="t" style="left:1219px;width:400px;text-align:right;top:211.04px;font-size:11px;line-height:12.639px;color:#1e1e1e;">0</div>
<div class="r" style="left:438px;top:228px;width:15px;height:20px;background:#f3f3f6;"></div>
<div class="r" style="left:438px;top:248px;width:15px;height:1px;background:#d4d5dc;"></div>
<div class="r" style="left:453px;top:228px;width:1px;height:21px;background:#c9cad3;"></div>
<div class="r" style="left:454px;top:228px;width:1226px;height:20px;background:#dfdfdf;"></div>
<div class="r" style="left:454px;top:248px;width:1226px;height:1px;background:#d4d5dc;"></div>
<div class="r" style="left:1500px;top:228px;width:73px;height:20px;background:#add8e6;"></div>
<div class="r" style="left:1574px;top:228px;width:48px;height:20px;background:#add8e6;"></div>
<div class="r" style="left:647px;top:228px;width:1px;height:20px;background:#d4d5dc;"></div>
<div class="r" style="left:888px;top:228px;width:1px;height:20px;background:#d4d5dc;"></div>
<div class="r" style="left:956px;top:228px;width:1px;height:20px;background:#d4d5dc;"></div>
<div class="r" style="left:1017px;top:228px;width:1px;height:20px;background:#d4d5dc;"></div>
<div class="r" style="left:1078px;top:228px;width:1px;height:20px;background:#d4d5dc;"></div>
<div class="r" style="left:1155px;top:228px;width:1px;height:20px;background:#d4d5dc;"></div>
<div class="r" style="left:1221px;top:228px;width:1px;height:20px;background:#d4d5dc;"></div>
<div class="r" style="left:1294px;top:228px;width:1px;height:20px;background:#d4d5dc;"></div>
<div class="r" style="left:1368px;top:228px;width:1px;height:20px;background:#d4d5dc;"></div>
<div class="r" style="left:1423px;top:228px;width:1px;height:20px;background:#d4d5dc;"></div>
<div class="r" style="left:1499px;top:228px;width:1px;height:20px;background:#d4d5dc;"></div>
<div class="r" style="left:1573px;top:228px;width:1px;height:20px;background:#d4d5dc;"></div>
<div class="r" style="left:1622px;top:228px;width:1px;height:20px;background:#d4d5dc;"></div>
<svg class="r" style="left:456px;top:233px;" width="9" height="9" viewBox="0 0 9 9"><rect x="0.5" y="0.5" width="8" height="8" fill="none" stroke="#151525" stroke-width="1"/><path d="M2 4.5 L7 4.5" stroke="#151525" stroke-width="1"/><path d="M4.5 2 L4.5 7" stroke="#151525" stroke-width="1"/></svg>
<div class="t" style="left:651.5px;top:232.04px;font-size:11px;line-height:12.639px;color:#1e1e1e;letter-spacing:-0.4px;">INOX-2-3000x1500_WMSPDKBG_SCR0</div>
<div class="t" style="left:892.5px;top:232.04px;font-size:11px;line-height:12.639px;color:#1e1e1e;letter-spacing:-0.3px;">INOX</div>
<div class="t" style="left:960.5px;top:232.04px;font-size:11px;line-height:12.639px;color:#1e1e1e;letter-spacing:-0.3px;">3000 mm</div>
<div class="t" style="left:1021.5px;top:232.04px;font-size:11px;line-height:12.639px;color:#1e1e1e;letter-spacing:-0.3px;">1500 mm</div>
<div class="t" style="left:1082.5px;top:232.04px;font-size:11px;line-height:12.639px;color:#1e1e1e;letter-spacing:-0.3px;">2 mm</div>
<div class="t" style="left:818px;width:400px;text-align:right;top:232.04px;font-size:11px;line-height:12.639px;color:#108010;font-weight:bold;">1</div>
<div class="t" style="left:891px;width:400px;text-align:right;top:232.04px;font-size:11px;line-height:12.639px;color:#111;font-weight:bold;">0</div>
<div class="t" style="left:965px;width:400px;text-align:right;top:232.04px;font-size:11px;line-height:12.639px;color:#111;font-weight:bold;">1</div>
<svg class="r" style="left:1390px;top:231px;" width="13" height="13" viewBox="0 0 13 13"><rect x="0.5" y="0.5" width="12" height="12" fill="#fff" stroke="#8a8d96" stroke-width="1"/><rect x="1.5" y="1.5" width="10" height="10" fill="none" stroke="#dcdee5" stroke-width="1"/><path d="M1.9 6.3 L5.4 11.2 L12.4 -0.8" fill="none" stroke="#1a1622" stroke-width="1.5"/></svg>
<svg class="r" style="left:1455px;top:231px;" width="13" height="13" viewBox="0 0 13 13"><rect x="0.5" y="0.5" width="12" height="12" fill="#fff" stroke="#8a8d96" stroke-width="1"/><rect x="1.5" y="1.5" width="10" height="10" fill="none" stroke="#dcdee5" stroke-width="1"/></svg>
<div class="t" style="left:1503.5px;top:232.04px;font-size:11px;line-height:12.639px;color:#1e1e1e;letter-spacing:0px;">0 kg</div>
<div class="t" style="left:1219px;width:400px;text-align:right;top:232.04px;font-size:11px;line-height:12.639px;color:#1e1e1e;">0</div>
<div class="r" style="left:438px;top:249px;width:15px;height:20px;background:#f3f3f6;"></div>
<div class="r" style="left:438px;top:269px;width:15px;height:1px;background:#d4d5dc;"></div>
<div class="r" style="left:453px;top:249px;width:1px;height:21px;background:#c9cad3;"></div>
<div class="r" style="left:454px;top:249px;width:1226px;height:20px;background:#ffffff;"></div>
<div class="r" style="left:454px;top:269px;width:1226px;height:1px;background:#d4d5dc;"></div>
<div class="r" style="left:1500px;top:249px;width:73px;height:20px;background:#add8e6;"></div>
<div class="r" style="left:1574px;top:249px;width:48px;height:20px;background:#add8e6;"></div>
<div class="r" style="left:647px;top:249px;width:1px;height:20px;background:#d4d5dc;"></div>
<div class="r" style="left:888px;top:249px;width:1px;height:20px;background:#d4d5dc;"></div>
<div class="r" style="left:956px;top:249px;width:1px;height:20px;background:#d4d5dc;"></div>
<div class="r" style="left:1017px;top:249px;width:1px;height:20px;background:#d4d5dc;"></div>
<div class="r" style="left:1078px;top:249px;width:1px;height:20px;background:#d4d5dc;"></div>
<div class="r" style="left:1155px;top:249px;width:1px;height:20px;background:#d4d5dc;"></div>
<div class="r" style="left:1221px;top:249px;width:1px;height:20px;background:#d4d5dc;"></div>
<div class="r" style="left:1294px;top:249px;width:1px;height:20px;background:#d4d5dc;"></div>
<div class="r" style="left:1368px;top:249px;width:1px;height:20px;background:#d4d5dc;"></div>
<div class="r" style="left:1423px;top:249px;width:1px;height:20px;background:#d4d5dc;"></div>
<div class="r" style="left:1499px;top:249px;width:1px;height:20px;background:#d4d5dc;"></div>
<div class="r" style="left:1573px;top:249px;width:1px;height:20px;background:#d4d5dc;"></div>
<div class="r" style="left:1622px;top:249px;width:1px;height:20px;background:#d4d5dc;"></div>
<svg class="r" style="left:456px;top:254px;" width="9" height="9" viewBox="0 0 9 9"><rect x="0.5" y="0.5" width="8" height="8" fill="none" stroke="#151525" stroke-width="1"/><path d="M2 4.5 L7 4.5" stroke="#151525" stroke-width="1"/><path d="M4.5 2 L4.5 7" stroke="#151525" stroke-width="1"/></svg>
<div class="t" style="left:651.5px;top:253.04px;font-size:11px;line-height:12.639px;color:#1e1e1e;letter-spacing:-0.4px;">FE-12-3000x1500_FCRODKQB_SCR0</div>
<div class="t" style="left:892.5px;top:253.04px;font-size:11px;line-height:12.639px;color:#1e1e1e;letter-spacing:-0.3px;">FE</div>
<div class="t" style="left:960.5px;top:253.04px;font-size:11px;line-height:12.639px;color:#1e1e1e;letter-spacing:-0.3px;">3000 mm</div>
<div class="t" style="left:1021.5px;top:253.04px;font-size:11px;line-height:12.639px;color:#1e1e1e;letter-spacing:-0.3px;">1500 mm</div>
<div class="t" style="left:1082.5px;top:253.04px;font-size:11px;line-height:12.639px;color:#1e1e1e;letter-spacing:-0.3px;">12 mm</div>
<div class="t" style="left:818px;width:400px;text-align:right;top:253.04px;font-size:11px;line-height:12.639px;color:#108010;font-weight:bold;">1</div>
<div class="t" style="left:891px;width:400px;text-align:right;top:253.04px;font-size:11px;line-height:12.639px;color:#111;font-weight:bold;">0</div>
<div class="t" style="left:965px;width:400px;text-align:right;top:253.04px;font-size:11px;line-height:12.639px;color:#111;font-weight:bold;">1</div>
<svg class="r" style="left:1390px;top:252px;" width="13" height="13" viewBox="0 0 13 13"><rect x="0.5" y="0.5" width="12" height="12" fill="#fff" stroke="#8a8d96" stroke-width="1"/><rect x="1.5" y="1.5" width="10" height="10" fill="none" stroke="#dcdee5" stroke-width="1"/><path d="M1.9 6.3 L5.4 11.2 L12.4 -0.8" fill="none" stroke="#1a1622" stroke-width="1.5"/></svg>
<svg class="r" style="left:1455px;top:252px;" width="13" height="13" viewBox="0 0 13 13"><rect x="0.5" y="0.5" width="12" height="12" fill="#fff" stroke="#8a8d96" stroke-width="1"/><rect x="1.5" y="1.5" width="10" height="10" fill="none" stroke="#dcdee5" stroke-width="1"/></svg>
<div class="t" style="left:1503.5px;top:253.04px;font-size:11px;line-height:12.639px;color:#1e1e1e;letter-spacing:0px;">292.58 kg</div>
<div class="t" style="left:1219px;width:400px;text-align:right;top:253.04px;font-size:11px;line-height:12.639px;color:#1e1e1e;">0</div>
<div class="r" style="left:438px;top:270px;width:15px;height:20px;background:#f3f3f6;"></div>
<div class="r" style="left:438px;top:290px;width:15px;height:1px;background:#d4d5dc;"></div>
<div class="r" style="left:453px;top:270px;width:1px;height:21px;background:#c9cad3;"></div>
<div class="r" style="left:454px;top:270px;width:1226px;height:20px;background:#dfdfdf;"></div>
<div class="r" style="left:454px;top:290px;width:1226px;height:1px;background:#d4d5dc;"></div>
<div class="r" style="left:1500px;top:270px;width:73px;height:20px;background:#add8e6;"></div>
<div class="r" style="left:1574px;top:270px;width:48px;height:20px;background:#add8e6;"></div>
<div class="r" style="left:647px;top:270px;width:1px;height:20px;background:#d4d5dc;"></div>
<div class="r" style="left:888px;top:270px;width:1px;height:20px;background:#d4d5dc;"></div>
<div class="r" style="left:956px;top:270px;width:1px;height:20px;background:#d4d5dc;"></div>
<div class="r" style="left:1017px;top:270px;width:1px;height:20px;background:#d4d5dc;"></div>
<div class="r" style="left:1078px;top:270px;width:1px;height:20px;background:#d4d5dc;"></div>
<div class="r" style="left:1155px;top:270px;width:1px;height:20px;background:#d4d5dc;"></div>
<div class="r" style="left:1221px;top:270px;width:1px;height:20px;background:#d4d5dc;"></div>
<div class="r" style="left:1294px;top:270px;width:1px;height:20px;background:#d4d5dc;"></div>
<div class="r" style="left:1368px;top:270px;width:1px;height:20px;background:#d4d5dc;"></div>
<div class="r" style="left:1423px;top:270px;width:1px;height:20px;background:#d4d5dc;"></div>
<div class="r" style="left:1499px;top:270px;width:1px;height:20px;background:#d4d5dc;"></div>
<div class="r" style="left:1573px;top:270px;width:1px;height:20px;background:#d4d5dc;"></div>
<div class="r" style="left:1622px;top:270px;width:1px;height:20px;background:#d4d5dc;"></div>
<svg class="r" style="left:456px;top:275px;" width="9" height="9" viewBox="0 0 9 9"><rect x="0.5" y="0.5" width="8" height="8" fill="none" stroke="#151525" stroke-width="1"/><path d="M2 4.5 L7 4.5" stroke="#151525" stroke-width="1"/><path d="M4.5 2 L4.5 7" stroke="#151525" stroke-width="1"/></svg>
<div class="t" style="left:651.5px;top:274.05px;font-size:11px;line-height:12.639px;color:#1e1e1e;letter-spacing:-0.4px;">_GPQJJDRP_SCR0</div>
<div class="t" style="left:892.5px;top:274.05px;font-size:11px;line-height:12.639px;color:#1e1e1e;letter-spacing:-0.3px;">FE</div>
<div class="t" style="left:960.5px;top:274.05px;font-size:11px;line-height:12.639px;color:#1e1e1e;letter-spacing:-0.3px;">4000 mm</div>
<div class="t" style="left:1021.5px;top:274.05px;font-size:11px;line-height:12.639px;color:#1e1e1e;letter-spacing:-0.3px;">2000 mm</div>
<div class="t" style="left:1082.5px;top:274.05px;font-size:11px;line-height:12.639px;color:#1e1e1e;letter-spacing:-0.3px;">2 mm</div>
<div class="t" style="left:818px;width:400px;text-align:right;top:274.05px;font-size:11px;line-height:12.639px;color:#108010;font-weight:bold;">1</div>
<div class="t" style="left:891px;width:400px;text-align:right;top:274.05px;font-size:11px;line-height:12.639px;color:#111;font-weight:bold;">0</div>
<div class="t" style="left:965px;width:400px;text-align:right;top:274.05px;font-size:11px;line-height:12.639px;color:#111;font-weight:bold;">1</div>
<svg class="r" style="left:1390px;top:273px;" width="13" height="13" viewBox="0 0 13 13"><rect x="0.5" y="0.5" width="12" height="12" fill="#fff" stroke="#8a8d96" stroke-width="1"/><rect x="1.5" y="1.5" width="10" height="10" fill="none" stroke="#dcdee5" stroke-width="1"/><path d="M1.9 6.3 L5.4 11.2 L12.4 -0.8" fill="none" stroke="#1a1622" stroke-width="1.5"/></svg>
<svg class="r" style="left:1455px;top:273px;" width="13" height="13" viewBox="0 0 13 13"><rect x="0.5" y="0.5" width="12" height="12" fill="#fff" stroke="#8a8d96" stroke-width="1"/><rect x="1.5" y="1.5" width="10" height="10" fill="none" stroke="#dcdee5" stroke-width="1"/></svg>
<div class="t" style="left:1503.5px;top:274.05px;font-size:11px;line-height:12.639px;color:#1e1e1e;letter-spacing:0px;">43.63 kg</div>
<div class="t" style="left:1219px;width:400px;text-align:right;top:274.05px;font-size:11px;line-height:12.639px;color:#1e1e1e;">0</div>
<div class="r" style="left:438px;top:291px;width:15px;height:20px;background:#f3f3f6;"></div>
<div class="r" style="left:438px;top:311px;width:15px;height:1px;background:#d4d5dc;"></div>
<div class="r" style="left:453px;top:291px;width:1px;height:21px;background:#c9cad3;"></div>
<div class="r" style="left:454px;top:291px;width:1226px;height:20px;background:#ffffff;"></div>
<div class="r" style="left:454px;top:311px;width:1226px;height:1px;background:#d4d5dc;"></div>
<div class="r" style="left:1500px;top:291px;width:73px;height:20px;background:#add8e6;"></div>
<div class="r" style="left:1574px;top:291px;width:48px;height:20px;background:#add8e6;"></div>
<div class="r" style="left:647px;top:291px;width:1px;height:20px;background:#d4d5dc;"></div>
<div class="r" style="left:888px;top:291px;width:1px;height:20px;background:#d4d5dc;"></div>
<div class="r" style="left:956px;top:291px;width:1px;height:20px;background:#d4d5dc;"></div>
<div class="r" style="left:1017px;top:291px;width:1px;height:20px;background:#d4d5dc;"></div>
<div class="r" style="left:1078px;top:291px;width:1px;height:20px;background:#d4d5dc;"></div>
<div class="r" style="left:1155px;top:291px;width:1px;height:20px;background:#d4d5dc;"></div>
<div class="r" style="left:1221px;top:291px;width:1px;height:20px;background:#d4d5dc;"></div>
<div class="r" style="left:1294px;top:291px;width:1px;height:20px;background:#d4d5dc;"></div>
<div class="r" style="left:1368px;top:291px;width:1px;height:20px;background:#d4d5dc;"></div>
<div class="r" style="left:1423px;top:291px;width:1px;height:20px;background:#d4d5dc;"></div>
<div class="r" style="left:1499px;top:291px;width:1px;height:20px;background:#d4d5dc;"></div>
<div class="r" style="left:1573px;top:291px;width:1px;height:20px;background:#d4d5dc;"></div>
<div class="r" style="left:1622px;top:291px;width:1px;height:20px;background:#d4d5dc;"></div>
<svg class="r" style="left:456px;top:296px;" width="9" height="9" viewBox="0 0 9 9"><rect x="0.5" y="0.5" width="8" height="8" fill="none" stroke="#151525" stroke-width="1"/><path d="M2 4.5 L7 4.5" stroke="#151525" stroke-width="1"/><path d="M4.5 2 L4.5 7" stroke="#151525" stroke-width="1"/></svg>
<div class="t" style="left:651.5px;top:295.05px;font-size:11px;line-height:12.639px;color:#1e1e1e;letter-spacing:-0.4px;">FE-4-2000x1000_VKAXOKOZ_SCR0</div>
<div class="t" style="left:892.5px;top:295.05px;font-size:11px;line-height:12.639px;color:#1e1e1e;letter-spacing:-0.3px;">FE</div>
<div class="t" style="left:960.5px;top:295.05px;font-size:11px;line-height:12.639px;color:#1e1e1e;letter-spacing:-0.3px;">2000 mm</div>
<div class="t" style="left:1021.5px;top:295.05px;font-size:11px;line-height:12.639px;color:#1e1e1e;letter-spacing:-0.3px;">1000 mm</div>
<div class="t" style="left:1082.5px;top:295.05px;font-size:11px;line-height:12.639px;color:#1e1e1e;letter-spacing:-0.3px;">4 mm</div>
<div class="t" style="left:818px;width:400px;text-align:right;top:295.05px;font-size:11px;line-height:12.639px;color:#108010;font-weight:bold;">1</div>
<div class="t" style="left:891px;width:400px;text-align:right;top:295.05px;font-size:11px;line-height:12.639px;color:#111;font-weight:bold;">0</div>
<div class="t" style="left:965px;width:400px;text-align:right;top:295.05px;font-size:11px;line-height:12.639px;color:#111;font-weight:bold;">1</div>
<svg class="r" style="left:1390px;top:294px;" width="13" height="13" viewBox="0 0 13 13"><rect x="0.5" y="0.5" width="12" height="12" fill="#fff" stroke="#8a8d96" stroke-width="1"/><rect x="1.5" y="1.5" width="10" height="10" fill="none" stroke="#dcdee5" stroke-width="1"/><path d="M1.9 6.3 L5.4 11.2 L12.4 -0.8" fill="none" stroke="#1a1622" stroke-width="1.5"/></svg>
<svg class="r" style="left:1455px;top:294px;" width="13" height="13" viewBox="0 0 13 13"><rect x="0.5" y="0.5" width="12" height="12" fill="#fff" stroke="#8a8d96" stroke-width="1"/><rect x="1.5" y="1.5" width="10" height="10" fill="none" stroke="#dcdee5" stroke-width="1"/></svg>
<div class="t" style="left:1503.5px;top:295.05px;font-size:11px;line-height:12.639px;color:#1e1e1e;letter-spacing:0px;">59.69 kg</div>
<div class="t" style="left:1219px;width:400px;text-align:right;top:295.05px;font-size:11px;line-height:12.639px;color:#1e1e1e;">0</div>
<div class="r" style="left:438px;top:312px;width:15px;height:20px;background:#f3f3f6;"></div>
<div class="r" style="left:438px;top:332px;width:15px;height:1px;background:#d4d5dc;"></div>
<div class="r" style="left:453px;top:312px;width:1px;height:21px;background:#c9cad3;"></div>
<div class="r" style="left:454px;top:312px;width:1226px;height:20px;background:#dfdfdf;"></div>
<div class="r" style="left:454px;top:332px;width:1226px;height:1px;background:#d4d5dc;"></div>
<div class="r" style="left:1500px;top:312px;width:73px;height:20px;background:#add8e6;"></div>
<div class="r" style="left:1574px;top:312px;width:48px;height:20px;background:#add8e6;"></div>
<div class="r" style="left:647px;top:312px;width:1px;height:20px;background:#d4d5dc;"></div>
<div class="r" style="left:888px;top:312px;width:1px;height:20px;background:#d4d5dc;"></div>
<div class="r" style="left:956px;top:312px;width:1px;height:20px;background:#d4d5dc;"></div>
<div class="r" style="left:1017px;top:312px;width:1px;height:20px;background:#d4d5dc;"></div>
<div class="r" style="left:1078px;top:312px;width:1px;height:20px;background:#d4d5dc;"></div>
<div class="r" style="left:1155px;top:312px;width:1px;height:20px;background:#d4d5dc;"></div>
<div class="r" style="left:1221px;top:312px;width:1px;height:20px;background:#d4d5dc;"></div>
<div class="r" style="left:1294px;top:312px;width:1px;height:20px;background:#d4d5dc;"></div>
<div class="r" style="left:1368px;top:312px;width:1px;height:20px;background:#d4d5dc;"></div>
<div class="r" style="left:1423px;top:312px;width:1px;height:20px;background:#d4d5dc;"></div>
<div class="r" style="left:1499px;top:312px;width:1px;height:20px;background:#d4d5dc;"></div>
<div class="r" style="left:1573px;top:312px;width:1px;height:20px;background:#d4d5dc;"></div>
<div class="r" style="left:1622px;top:312px;width:1px;height:20px;background:#d4d5dc;"></div>
<svg class="r" style="left:456px;top:317px;" width="9" height="9" viewBox="0 0 9 9"><rect x="0.5" y="0.5" width="8" height="8" fill="none" stroke="#151525" stroke-width="1"/><path d="M2 4.5 L7 4.5" stroke="#151525" stroke-width="1"/><path d="M4.5 2 L4.5 7" stroke="#151525" stroke-width="1"/></svg>
<div class="t" style="left:471.5px;top:316.05px;font-size:11px;line-height:12.639px;color:#1e1e1e;letter-spacing:-0.3px;">SCRAP_FE 1000x500</div>
<div class="t" style="left:651.5px;top:316.05px;font-size:11px;line-height:12.639px;color:#1e1e1e;letter-spacing:-0.4px;">Scheletro1</div>
<div class="t" style="left:892.5px;top:316.05px;font-size:11px;line-height:12.639px;color:#1e1e1e;letter-spacing:-0.3px;">FE</div>
<div class="t" style="left:960.5px;top:316.05px;font-size:11px;line-height:12.639px;color:#1e1e1e;letter-spacing:-0.3px;">1000 mm</div>
<div class="t" style="left:1021.5px;top:316.05px;font-size:11px;line-height:12.639px;color:#1e1e1e;letter-spacing:-0.3px;">500 mm</div>
<div class="t" style="left:1082.5px;top:316.05px;font-size:11px;line-height:12.639px;color:#1e1e1e;letter-spacing:-0.3px;">4 mm</div>
<div class="t" style="left:818px;width:400px;text-align:right;top:316.05px;font-size:11px;line-height:12.639px;color:#108010;font-weight:bold;">1</div>
<div class="t" style="left:891px;width:400px;text-align:right;top:316.05px;font-size:11px;line-height:12.639px;color:#111;font-weight:bold;">0</div>
<div class="t" style="left:965px;width:400px;text-align:right;top:316.05px;font-size:11px;line-height:12.639px;color:#111;font-weight:bold;">1</div>
<svg class="r" style="left:1390px;top:315px;" width="13" height="13" viewBox="0 0 13 13"><rect x="0.5" y="0.5" width="12" height="12" fill="#fff" stroke="#8a8d96" stroke-width="1"/><rect x="1.5" y="1.5" width="10" height="10" fill="none" stroke="#dcdee5" stroke-width="1"/><path d="M1.9 6.3 L5.4 11.2 L12.4 -0.8" fill="none" stroke="#1a1622" stroke-width="1.5"/></svg>
<svg class="r" style="left:1455px;top:315px;" width="13" height="13" viewBox="0 0 13 13"><rect x="0.5" y="0.5" width="12" height="12" fill="#fff" stroke="#8a8d96" stroke-width="1"/><rect x="1.5" y="1.5" width="10" height="10" fill="none" stroke="#dcdee5" stroke-width="1"/></svg>
<div class="t" style="left:1503.5px;top:316.05px;font-size:11px;line-height:12.639px;color:#1e1e1e;letter-spacing:0px;">0 kg</div>
<div class="t" style="left:1219px;width:400px;text-align:right;top:316.05px;font-size:11px;line-height:12.639px;color:#1e1e1e;">5</div>
<div class="r" style="left:438px;top:333px;width:15px;height:20px;background:#f3f3f6;"></div>
<div class="r" style="left:438px;top:353px;width:15px;height:1px;background:#d4d5dc;"></div>
<div class="r" style="left:453px;top:333px;width:1px;height:21px;background:#c9cad3;"></div>
<div class="r" style="left:454px;top:333px;width:1226px;height:20px;background:#ffffff;"></div>
<div class="r" style="left:454px;top:353px;width:1226px;height:1px;background:#d4d5dc;"></div>
<div class="r" style="left:1500px;top:333px;width:73px;height:20px;background:#add8e6;"></div>
<div class="r" style="left:1574px;top:333px;width:48px;height:20px;background:#add8e6;"></div>
<div class="r" style="left:647px;top:333px;width:1px;height:20px;background:#d4d5dc;"></div>
<div class="r" style="left:888px;top:333px;width:1px;height:20px;background:#d4d5dc;"></div>
<div class="r" style="left:956px;top:333px;width:1px;height:20px;background:#d4d5dc;"></div>
<div class="r" style="left:1017px;top:333px;width:1px;height:20px;background:#d4d5dc;"></div>
<div class="r" style="left:1078px;top:333px;width:1px;height:20px;background:#d4d5dc;"></div>
<div class="r" style="left:1155px;top:333px;width:1px;height:20px;background:#d4d5dc;"></div>
<div class="r" style="left:1221px;top:333px;width:1px;height:20px;background:#d4d5dc;"></div>
<div class="r" style="left:1294px;top:333px;width:1px;height:20px;background:#d4d5dc;"></div>
<div class="r" style="left:1368px;top:333px;width:1px;height:20px;background:#d4d5dc;"></div>
<div class="r" style="left:1423px;top:333px;width:1px;height:20px;background:#d4d5dc;"></div>
<div class="r" style="left:1499px;top:333px;width:1px;height:20px;background:#d4d5dc;"></div>
<div class="r" style="left:1573px;top:333px;width:1px;height:20px;background:#d4d5dc;"></div>
<div class="r" style="left:1622px;top:333px;width:1px;height:20px;background:#d4d5dc;"></div>
<svg class="r" style="left:456px;top:338px;" width="9" height="9" viewBox="0 0 9 9"><rect x="0.5" y="0.5" width="8" height="8" fill="none" stroke="#151525" stroke-width="1"/><path d="M2 4.5 L7 4.5" stroke="#151525" stroke-width="1"/></svg>
<div class="t" style="left:471.5px;top:337.05px;font-size:11px;line-height:12.639px;color:#1e1e1e;letter-spacing:-0.3px;">SCRAP_FE 4000x2000</div>
<div class="t" style="left:651.5px;top:337.05px;font-size:11px;line-height:12.639px;color:#1e1e1e;letter-spacing:-0.4px;">_BWQFQGNB_SCR</div>
<div class="t" style="left:892.5px;top:337.05px;font-size:11px;line-height:12.639px;color:#1e1e1e;letter-spacing:-0.3px;">FE</div>
<div class="t" style="left:960.5px;top:337.05px;font-size:11px;line-height:12.639px;color:#1e1e1e;letter-spacing:-0.3px;">4000 mm</div>
<div class="t" style="left:1021.5px;top:337.05px;font-size:11px;line-height:12.639px;color:#1e1e1e;letter-spacing:-0.3px;">2000 mm</div>
<div class="t" style="left:1082.5px;top:337.05px;font-size:11px;line-height:12.639px;color:#1e1e1e;letter-spacing:-0.3px;">6 mm</div>
<div class="t" style="left:818px;width:400px;text-align:right;top:337.05px;font-size:11px;line-height:12.639px;color:#108010;font-weight:bold;">37</div>
<div class="t" style="left:891px;width:400px;text-align:right;top:337.05px;font-size:11px;line-height:12.639px;color:#111;font-weight:bold;">0</div>
<div class="t" style="left:965px;width:400px;text-align:right;top:337.05px;font-size:11px;line-height:12.639px;color:#111;font-weight:bold;">37</div>
<svg class="r" style="left:1390px;top:336px;" width="13" height="13" viewBox="0 0 13 13"><rect x="0.5" y="0.5" width="12" height="12" fill="#fff" stroke="#8a8d96" stroke-width="1"/><rect x="1.5" y="1.5" width="10" height="10" fill="none" stroke="#dcdee5" stroke-width="1"/><path d="M1.9 6.3 L5.4 11.2 L12.4 -0.8" fill="none" stroke="#1a1622" stroke-width="1.5"/></svg>
<svg class="r" style="left:1455px;top:336px;" width="13" height="13" viewBox="0 0 13 13"><rect x="0.5" y="0.5" width="12" height="12" fill="#fff" stroke="#8a8d96" stroke-width="1"/><rect x="1.5" y="1.5" width="10" height="10" fill="none" stroke="#dcdee5" stroke-width="1"/></svg>
<div class="t" style="left:1503.5px;top:337.05px;font-size:11px;line-height:12.639px;color:#1e1e1e;letter-spacing:0px;">7925.42 kg</div>
<div class="t" style="left:1219px;width:400px;text-align:right;top:337.05px;font-size:11px;line-height:12.639px;color:#1e1e1e;">0</div>
<div class="r" style="left:438px;top:354px;width:15px;height:42px;background:#f3f3f6;"></div>
<div class="r" style="left:438px;top:396px;width:15px;height:1px;background:#d4d5dc;"></div>
<div class="r" style="left:453px;top:354px;width:1px;height:43px;background:#c9cad3;"></div>
<div class="r" style="left:454px;top:354px;width:21px;height:42px;background:#ffffff;"></div>
<div class="r" style="left:475px;top:354px;width:1205px;height:43px;background:#ffffff;border:1px solid #9a9eab;border-right:none;box-sizing:border-box;"></div>
<div class="r" style="left:476px;top:355px;width:1204px;height:19px;background:linear-gradient(#f7f7f9,#efeff3);"></div>
<div class="r" style="left:476px;top:374px;width:1204px;height:1px;background:#c9cad3;"></div>
<div class="r" style="left:476px;top:375px;width:15px;height:21px;background:#f3f3f6;"></div>
<div class="r" style="left:491px;top:355px;width:1px;height:41px;background:#c9cad3;"></div>
<div class="r" style="left:622px;top:355px;width:1px;height:41px;background:#d4d5dc;"></div>
<div class="r" style="left:753px;top:355px;width:1px;height:41px;background:#d4d5dc;"></div>
<div class="r" style="left:884px;top:355px;width:1px;height:41px;background:#d4d5dc;"></div>
<div class="r" style="left:1015px;top:355px;width:1px;height:41px;background:#d4d5dc;"></div>
<div class="r" style="left:1146px;top:355px;width:1px;height:41px;background:#d4d5dc;"></div>
<div class="r" style="left:1277px;top:355px;width:1px;height:41px;background:#d4d5dc;"></div>
<div class="r" style="left:1408px;top:355px;width:1px;height:41px;background:#d4d5dc;"></div>
<div class="r" style="left:1539px;top:355px;width:1px;height:41px;background:#d4d5dc;"></div>
<div class="r" style="left:476px;top:396px;width:1204px;height:1px;background:#9a9eab;"></div>
<div class="r" style="left:1679px;top:354px;width:1px;height:43px;background:#9a9eab;"></div>
<div class="t" style="left:495.5px;top:358.05px;font-size:11px;line-height:12.639px;color:#1e2030;letter-spacing:-0.2px;">Group</div>
<div class="t" style="left:626.5px;top:358.05px;font-size:11px;line-height:12.639px;color:#1e2030;letter-spacing:-0.2px;">Locations</div>
<div class="t" style="left:757.5px;top:358.05px;font-size:11px;line-height:12.639px;color:#1e2030;letter-spacing:-0.2px;">Quantity</div>
<div class="t" style="left:888.5px;top:358.05px;font-size:11px;line-height:12.639px;color:#1e2030;letter-spacing:-0.2px;">Engaged</div>
<div class="t" style="left:1019.5px;top:358.05px;font-size:11px;line-height:12.639px;color:#1e2030;letter-spacing:-0.2px;">Available</div>
<div class="t" style="left:1150.5px;top:358.05px;font-size:11px;line-height:12.639px;color:#1e2030;letter-spacing:-0.2px;">Scrap</div>
<div class="t" style="left:1281.5px;top:358.05px;font-size:11px;line-height:12.639px;color:#1e2030;letter-spacing:-0.2px;">Note</div>
<div class="t" style="left:1412.5px;top:358.05px;font-size:11px;line-height:12.639px;color:#1e2030;letter-spacing:-0.2px;">Weight</div>
<div class="t" style="left:1543.5px;top:358.05px;font-size:11px;line-height:12.639px;color:#1e2030;letter-spacing:-0.2px;">Cost</div>
<svg class="r" style="left:479px;top:360px;" width="9" height="9" viewBox="0 0 9 9"><circle cx="3.5" cy="3.5" r="2.5" fill="none" stroke="#333" stroke-width="1.2"/><path d="M5.3 5.3 L8.3 8.3" stroke="#333" stroke-width="1.5"/></svg>
<svg class="r" style="left:482px;top:381px;" width="5" height="9" viewBox="0 0 5 9"><path d="M0 0 L4.2 4 L0 8 Z" fill="#111"/></svg>
<div class="t" style="left:495.5px;top:379.05px;font-size:11px;line-height:12.639px;color:#1e1e1e;letter-spacing:-0.3px;">Colata120</div>
<div class="t" style="left:626.5px;top:379.05px;font-size:11px;line-height:12.639px;color:#1e1e1e;letter-spacing:-0.3px;">UBIQ2</div>
<div class="t" style="left:481px;width:400px;text-align:right;top:379.05px;font-size:11px;line-height:12.639px;color:#1e1e1e;">37</div>
<div class="t" style="left:612px;width:400px;text-align:right;top:379.05px;font-size:11px;line-height:12.639px;color:#1e1e1e;">0</div>
<div class="t" style="left:743px;width:400px;text-align:right;top:379.05px;font-size:11px;line-height:12.639px;color:#1e1e1e;">37</div>
<svg class="r" style="left:1206px;top:378px;" width="13" height="13" viewBox="0 0 13 13"><rect x="0.5" y="0.5" width="12" height="12" fill="#fff" stroke="#8a8d96" stroke-width="1"/><rect x="1.5" y="1.5" width="10" height="10" fill="none" stroke="#dcdee5" stroke-width="1"/><path d="M1.9 6.3 L5.4 11.2 L12.4 -0.8" fill="none" stroke="#1a1622" stroke-width="1.5"/></svg>
<div class="t" style="left:1412.5px;top:379.05px;font-size:11px;line-height:12.639px;color:#1e1e1e;letter-spacing:0px;">7925.42 kg</div>
<div class="t" style="left:1276px;width:400px;text-align:right;top:379.05px;font-size:11px;line-height:12.639px;color:#1e1e1e;">0</div>
<div class="r" style="left:438px;top:397px;width:15px;height:20px;background:#f3f3f6;"></div>
<div class="r" style="left:438px;top:417px;width:15px;height:1px;background:#d4d5dc;"></div>
<div class="r" style="left:453px;top:397px;width:1px;height:21px;background:#c9cad3;"></div>
<div class="r" style="left:454px;top:397px;width:1226px;height:20px;background:#dfdfdf;"></div>
<div class="r" style="left:454px;top:417px;width:1226px;height:1px;background:#d4d5dc;"></div>
<div class="r" style="left:1500px;top:397px;width:73px;height:20px;background:#add8e6;"></div>
<div class="r" style="left:1574px;top:397px;width:48px;height:20px;background:#add8e6;"></div>
<div class="r" style="left:647px;top:397px;width:1px;height:20px;background:#d4d5dc;"></div>
<div class="r" style="left:888px;top:397px;width:1px;height:20px;background:#d4d5dc;"></div>
<div class="r" style="left:956px;top:397px;width:1px;height:20px;background:#d4d5dc;"></div>
<div class="r" style="left:1017px;top:397px;width:1px;height:20px;background:#d4d5dc;"></div>
<div class="r" style="left:1078px;top:397px;width:1px;height:20px;background:#d4d5dc;"></div>
<div class="r" style="left:1155px;top:397px;width:1px;height:20px;background:#d4d5dc;"></div>
<div class="r" style="left:1221px;top:397px;width:1px;height:20px;background:#d4d5dc;"></div>
<div class="r" style="left:1294px;top:397px;width:1px;height:20px;background:#d4d5dc;"></div>
<div class="r" style="left:1368px;top:397px;width:1px;height:20px;background:#d4d5dc;"></div>
<div class="r" style="left:1423px;top:397px;width:1px;height:20px;background:#d4d5dc;"></div>
<div class="r" style="left:1499px;top:397px;width:1px;height:20px;background:#d4d5dc;"></div>
<div class="r" style="left:1573px;top:397px;width:1px;height:20px;background:#d4d5dc;"></div>
<div class="r" style="left:1622px;top:397px;width:1px;height:20px;background:#d4d5dc;"></div>
<svg class="r" style="left:456px;top:402px;" width="9" height="9" viewBox="0 0 9 9"><rect x="0.5" y="0.5" width="8" height="8" fill="none" stroke="#151525" stroke-width="1"/><path d="M2 4.5 L7 4.5" stroke="#151525" stroke-width="1"/><path d="M4.5 2 L4.5 7" stroke="#151525" stroke-width="1"/></svg>
<div class="t" style="left:651.5px;top:401.05px;font-size:11px;line-height:12.639px;color:#1e1e1e;letter-spacing:-0.4px;">FE-4-2000x1000_MJMRKKNF_SCR0</div>
<div class="t" style="left:892.5px;top:401.05px;font-size:11px;line-height:12.639px;color:#1e1e1e;letter-spacing:-0.3px;">FE</div>
<div class="t" style="left:960.5px;top:401.05px;font-size:11px;line-height:12.639px;color:#1e1e1e;letter-spacing:-0.3px;">2000 mm</div>
<div class="t" style="left:1021.5px;top:401.05px;font-size:11px;line-height:12.639px;color:#1e1e1e;letter-spacing:-0.3px;">1000 mm</div>
<div class="t" style="left:1082.5px;top:401.05px;font-size:11px;line-height:12.639px;color:#1e1e1e;letter-spacing:-0.3px;">4 mm</div>
<div class="t" style="left:818px;width:400px;text-align:right;top:401.05px;font-size:11px;line-height:12.639px;color:#108010;font-weight:bold;">1</div>
<div class="t" style="left:891px;width:400px;text-align:right;top:401.05px;font-size:11px;line-height:12.639px;color:#111;font-weight:bold;">0</div>
<div class="t" style="left:965px;width:400px;text-align:right;top:401.05px;font-size:11px;line-height:12.639px;color:#111;font-weight:bold;">1</div>
<svg class="r" style="left:1390px;top:400px;" width="13" height="13" viewBox="0 0 13 13"><rect x="0.5" y="0.5" width="12" height="12" fill="#fff" stroke="#8a8d96" stroke-width="1"/><rect x="1.5" y="1.5" width="10" height="10" fill="none" stroke="#dcdee5" stroke-width="1"/><path d="M1.9 6.3 L5.4 11.2 L12.4 -0.8" fill="none" stroke="#1a1622" stroke-width="1.5"/></svg>
<svg class="r" style="left:1455px;top:400px;" width="13" height="13" viewBox="0 0 13 13"><rect x="0.5" y="0.5" width="12" height="12" fill="#fff" stroke="#8a8d96" stroke-width="1"/><rect x="1.5" y="1.5" width="10" height="10" fill="none" stroke="#dcdee5" stroke-width="1"/></svg>
<div class="t" style="left:1503.5px;top:401.05px;font-size:11px;line-height:12.639px;color:#1e1e1e;letter-spacing:0px;">27.26 kg</div>
<div class="t" style="left:1219px;width:400px;text-align:right;top:401.05px;font-size:11px;line-height:12.639px;color:#1e1e1e;">0</div>
<div class="r" style="left:438px;top:418px;width:15px;height:20px;background:#f3f3f6;"></div>
<div class="r" style="left:438px;top:438px;width:15px;height:1px;background:#d4d5dc;"></div>
<div class="r" style="left:453px;top:418px;width:1px;height:21px;background:#c9cad3;"></div>
<div class="r" style="left:454px;top:418px;width:1226px;height:20px;background:#ffffff;"></div>
<div class="r" style="left:454px;top:438px;width:1226px;height:1px;background:#d4d5dc;"></div>
<div class="r" style="left:1500px;top:418px;width:73px;height:20px;background:#add8e6;"></div>
<div class="r" style="left:1574px;top:418px;width:48px;height:20px;background:#add8e6;"></div>
<div class="r" style="left:647px;top:418px;width:1px;height:20px;background:#d4d5dc;"></div>
<div class="r" style="left:888px;top:418px;width:1px;height:20px;background:#d4d5dc;"></div>
<div class="r" style="left:956px;top:418px;width:1px;height:20px;background:#d4d5dc;"></div>
<div class="r" style="left:1017px;top:418px;width:1px;height:20px;background:#d4d5dc;"></div>
<div class="r" style="left:1078px;top:418px;width:1px;height:20px;background:#d4d5dc;"></div>
<div class="r" style="left:1155px;top:418px;width:1px;height:20px;background:#d4d5dc;"></div>
<div class="r" style="left:1221px;top:418px;width:1px;height:20px;background:#d4d5dc;"></div>
<div class="r" style="left:1294px;top:418px;width:1px;height:20px;background:#d4d5dc;"></div>
<div class="r" style="left:1368px;top:418px;width:1px;height:20px;background:#d4d5dc;"></div>
<div class="r" style="left:1423px;top:418px;width:1px;height:20px;background:#d4d5dc;"></div>
<div class="r" style="left:1499px;top:418px;width:1px;height:20px;background:#d4d5dc;"></div>
<div class="r" style="left:1573px;top:418px;width:1px;height:20px;background:#d4d5dc;"></div>
<div class="r" style="left:1622px;top:418px;width:1px;height:20px;background:#d4d5dc;"></div>
<svg class="r" style="left:456px;top:423px;" width="9" height="9" viewBox="0 0 9 9"><rect x="0.5" y="0.5" width="8" height="8" fill="none" stroke="#151525" stroke-width="1"/><path d="M2 4.5 L7 4.5" stroke="#151525" stroke-width="1"/><path d="M4.5 2 L4.5 7" stroke="#151525" stroke-width="1"/></svg>
<div class="t" style="left:471.5px;top:422.05px;font-size:11px;line-height:12.639px;color:#1e1e1e;letter-spacing:-0.3px;">SCRAP_FE 3000x1500</div>
<div class="t" style="left:651.5px;top:422.05px;font-size:11px;line-height:12.639px;color:#1e1e1e;letter-spacing:-0.4px;">Scheletro10</div>
<div class="t" style="left:892.5px;top:422.05px;font-size:11px;line-height:12.639px;color:#1e1e1e;letter-spacing:-0.3px;">FE</div>
<div class="t" style="left:960.5px;top:422.05px;font-size:11px;line-height:12.639px;color:#1e1e1e;letter-spacing:-0.3px;">3000 mm</div>
<div class="t" style="left:1021.5px;top:422.05px;font-size:11px;line-height:12.639px;color:#1e1e1e;letter-spacing:-0.3px;">1500 mm</div>
<div class="t" style="left:1082.5px;top:422.05px;font-size:11px;line-height:12.639px;color:#1e1e1e;letter-spacing:-0.3px;">2 mm</div>
<div class="t" style="left:818px;width:400px;text-align:right;top:422.05px;font-size:11px;line-height:12.639px;color:#108010;font-weight:bold;">10</div>
<div class="t" style="left:891px;width:400px;text-align:right;top:422.05px;font-size:11px;line-height:12.639px;color:#111;font-weight:bold;">0</div>
<div class="t" style="left:965px;width:400px;text-align:right;top:422.05px;font-size:11px;line-height:12.639px;color:#111;font-weight:bold;">10</div>
<svg class="r" style="left:1390px;top:421px;" width="13" height="13" viewBox="0 0 13 13"><rect x="0.5" y="0.5" width="12" height="12" fill="#fff" stroke="#8a8d96" stroke-width="1"/><rect x="1.5" y="1.5" width="10" height="10" fill="none" stroke="#dcdee5" stroke-width="1"/><path d="M1.9 6.3 L5.4 11.2 L12.4 -0.8" fill="none" stroke="#1a1622" stroke-width="1.5"/></svg>
<svg class="r" style="left:1455px;top:421px;" width="13" height="13" viewBox="0 0 13 13"><rect x="0.5" y="0.5" width="12" height="12" fill="#fff" stroke="#8a8d96" stroke-width="1"/><rect x="1.5" y="1.5" width="10" height="10" fill="none" stroke="#dcdee5" stroke-width="1"/></svg>
<div class="t" style="left:1503.5px;top:422.05px;font-size:11px;line-height:12.639px;color:#1e1e1e;letter-spacing:0px;">439.41 kg</div>
<div class="t" style="left:1219px;width:400px;text-align:right;top:422.05px;font-size:11px;line-height:12.639px;color:#1e1e1e;">0</div>
<div class="r" style="left:438px;top:439px;width:15px;height:20px;background:#f3f3f6;"></div>
<div class="r" style="left:438px;top:459px;width:15px;height:1px;background:#d4d5dc;"></div>
<div class="r" style="left:453px;top:439px;width:1px;height:21px;background:#c9cad3;"></div>
<div class="r" style="left:454px;top:439px;width:1226px;height:20px;background:#dfdfdf;"></div>
<div class="r" style="left:454px;top:459px;width:1226px;height:1px;background:#d4d5dc;"></div>
<div class="r" style="left:1500px;top:439px;width:73px;height:20px;background:#add8e6;"></div>
<div class="r" style="left:1574px;top:439px;width:48px;height:20px;background:#add8e6;"></div>
<div class="r" style="left:647px;top:439px;width:1px;height:20px;background:#d4d5dc;"></div>
<div class="r" style="left:888px;top:439px;width:1px;height:20px;background:#d4d5dc;"></div>
<div class="r" style="left:956px;top:439px;width:1px;height:20px;background:#d4d5dc;"></div>
<div class="r" style="left:1017px;top:439px;width:1px;height:20px;background:#d4d5dc;"></div>
<div class="r" style="left:1078px;top:439px;width:1px;height:20px;background:#d4d5dc;"></div>
<div class="r" style="left:1155px;top:439px;width:1px;height:20px;background:#d4d5dc;"></div>
<div class="r" style="left:1221px;top:439px;width:1px;height:20px;background:#d4d5dc;"></div>
<div class="r" style="left:1294px;top:439px;width:1px;height:20px;background:#d4d5dc;"></div>
<div class="r" style="left:1368px;top:439px;width:1px;height:20px;background:#d4d5dc;"></div>
<div class="r" style="left:1423px;top:439px;width:1px;height:20px;background:#d4d5dc;"></div>
<div class="r" style="left:1499px;top:439px;width:1px;height:20px;background:#d4d5dc;"></div>
<div class="r" style="left:1573px;top:439px;width:1px;height:20px;background:#d4d5dc;"></div>
<div class="r" style="left:1622px;top:439px;width:1px;height:20px;background:#d4d5dc;"></div>
<svg class="r" style="left:456px;top:444px;" width="9" height="9" viewBox="0 0 9 9"><rect x="0.5" y="0.5" width="8" height="8" fill="none" stroke="#151525" stroke-width="1"/><path d="M2 4.5 L7 4.5" stroke="#151525" stroke-width="1"/><path d="M4.5 2 L4.5 7" stroke="#151525" stroke-width="1"/></svg>
<div class="t" style="left:471.5px;top:443.05px;font-size:11px;line-height:12.639px;color:#1e1e1e;letter-spacing:-0.3px;">SCRAP_FE 3000x1500</div>
<div class="t" style="left:651.5px;top:443.05px;font-size:11px;line-height:12.639px;color:#1e1e1e;letter-spacing:-0.4px;">_SSNPIFUP_SCR</div>
<div class="t" style="left:892.5px;top:443.05px;font-size:11px;line-height:12.639px;color:#1e1e1e;letter-spacing:-0.3px;">FE</div>
<div class="t" style="left:960.5px;top:443.05px;font-size:11px;line-height:12.639px;color:#1e1e1e;letter-spacing:-0.3px;">3000 mm</div>
<div class="t" style="left:1021.5px;top:443.05px;font-size:11px;line-height:12.639px;color:#1e1e1e;letter-spacing:-0.3px;">1500 mm</div>
<div class="t" style="left:1082.5px;top:443.05px;font-size:11px;line-height:12.639px;color:#1e1e1e;letter-spacing:-0.3px;">10 mm</div>
<div class="t" style="left:818px;width:400px;text-align:right;top:443.05px;font-size:11px;line-height:12.639px;color:#108010;font-weight:bold;">1</div>
<div class="t" style="left:891px;width:400px;text-align:right;top:443.05px;font-size:11px;line-height:12.639px;color:#111;font-weight:bold;">0</div>
<div class="t" style="left:965px;width:400px;text-align:right;top:443.05px;font-size:11px;line-height:12.639px;color:#111;font-weight:bold;">1</div>
<svg class="r" style="left:1390px;top:442px;" width="13" height="13" viewBox="0 0 13 13"><rect x="0.5" y="0.5" width="12" height="12" fill="#fff" stroke="#8a8d96" stroke-width="1"/><rect x="1.5" y="1.5" width="10" height="10" fill="none" stroke="#dcdee5" stroke-width="1"/><path d="M1.9 6.3 L5.4 11.2 L12.4 -0.8" fill="none" stroke="#1a1622" stroke-width="1.5"/></svg>
<svg class="r" style="left:1455px;top:442px;" width="13" height="13" viewBox="0 0 13 13"><rect x="0.5" y="0.5" width="12" height="12" fill="#fff" stroke="#8a8d96" stroke-width="1"/><rect x="1.5" y="1.5" width="10" height="10" fill="none" stroke="#dcdee5" stroke-width="1"/></svg>
<div class="t" style="left:1503.5px;top:443.05px;font-size:11px;line-height:12.639px;color:#1e1e1e;letter-spacing:0px;">225.16 kg</div>
<div class="t" style="left:1219px;width:400px;text-align:right;top:443.05px;font-size:11px;line-height:12.639px;color:#1e1e1e;">0</div>
<div class="r" style="left:438px;top:460px;width:15px;height:20px;background:#f3f3f6;"></div>
<div class="r" style="left:438px;top:480px;width:15px;height:1px;background:#d4d5dc;"></div>
<div class="r" style="left:453px;top:460px;width:1px;height:21px;background:#c9cad3;"></div>
<div class="r" style="left:454px;top:460px;width:1226px;height:20px;background:#e2eafa;"></div>
<div class="r" style="left:454px;top:480px;width:1226px;height:1px;background:#d4d5dc;"></div>
<div class="r" style="left:1500px;top:460px;width:73px;height:20px;background:#add8e6;"></div>
<div class="r" style="left:1574px;top:460px;width:48px;height:20px;background:#add8e6;"></div>
<div class="r" style="left:647px;top:460px;width:1px;height:20px;background:#d4d5dc;"></div>
<div class="r" style="left:888px;top:460px;width:1px;height:20px;background:#d4d5dc;"></div>
<div class="r" style="left:956px;top:460px;width:1px;height:20px;background:#d4d5dc;"></div>
<div class="r" style="left:1017px;top:460px;width:1px;height:20px;background:#d4d5dc;"></div>
<div class="r" style="left:1078px;top:460px;width:1px;height:20px;background:#d4d5dc;"></div>
<div class="r" style="left:1155px;top:460px;width:1px;height:20px;background:#d4d5dc;"></div>
<div class="r" style="left:1221px;top:460px;width:1px;height:20px;background:#d4d5dc;"></div>
<div class="r" style="left:1294px;top:460px;width:1px;height:20px;background:#d4d5dc;"></div>
<div class="r" style="left:1368px;top:460px;width:1px;height:20px;background:#d4d5dc;"></div>
<div class="r" style="left:1423px;top:460px;width:1px;height:20px;background:#d4d5dc;"></div>
<div class="r" style="left:1499px;top:460px;width:1px;height:20px;background:#d4d5dc;"></div>
<div class="r" style="left:1573px;top:460px;width:1px;height:20px;background:#d4d5dc;"></div>
<div class="r" style="left:1622px;top:460px;width:1px;height:20px;background:#d4d5dc;"></div>
<div class="r" style="left:454px;top:460px;width:193px;height:20px;background:#ffffff;border:1px dotted #333;box-sizing:border-box;"></div>
<svg class="r" style="left:456px;top:465px;" width="9" height="9" viewBox="0 0 9 9"><rect x="0.5" y="0.5" width="8" height="8" fill="none" stroke="#151525" stroke-width="1"/><path d="M2 4.5 L7 4.5" stroke="#151525" stroke-width="1"/><path d="M4.5 2 L4.5 7" stroke="#151525" stroke-width="1"/></svg>
<div class="t" style="left:471.5px;top:464.05px;font-size:11px;line-height:12.639px;color:#1e1e1e;letter-spacing:-0.3px;">SCRAP_FE 2000x1000</div>
<div class="t" style="left:651.5px;top:464.05px;font-size:11px;line-height:12.639px;color:#1e1e1e;letter-spacing:-0.4px;">FE-6-2000x1000_NEEMGRGO_SCR</div>
<div class="t" style="left:892.5px;top:464.05px;font-size:11px;line-height:12.639px;color:#1e1e1e;letter-spacing:-0.3px;">FE</div>
<div class="t" style="left:960.5px;top:464.05px;font-size:11px;line-height:12.639px;color:#1e1e1e;letter-spacing:-0.3px;">2000 mm</div>
<div class="t" style="left:1021.5px;top:464.05px;font-size:11px;line-height:12.639px;color:#1e1e1e;letter-spacing:-0.3px;">1000 mm</div>
<div class="t" style="left:1082.5px;top:464.05px;font-size:11px;line-height:12.639px;color:#1e1e1e;letter-spacing:-0.3px;">6 mm</div>
<div class="t" style="left:818px;width:400px;text-align:right;top:464.05px;font-size:11px;line-height:12.639px;color:#108010;font-weight:bold;">1</div>
<div class="t" style="left:891px;width:400px;text-align:right;top:464.05px;font-size:11px;line-height:12.639px;color:#111;font-weight:bold;">0</div>
<div class="t" style="left:965px;width:400px;text-align:right;top:464.05px;font-size:11px;line-height:12.639px;color:#111;font-weight:bold;">1</div>
<svg class="r" style="left:1390px;top:463px;" width="13" height="13" viewBox="0 0 13 13"><rect x="0.5" y="0.5" width="12" height="12" fill="#fff" stroke="#8a8d96" stroke-width="1"/><rect x="1.5" y="1.5" width="10" height="10" fill="none" stroke="#dcdee5" stroke-width="1"/><path d="M1.9 6.3 L5.4 11.2 L12.4 -0.8" fill="none" stroke="#1a1622" stroke-width="1.5"/></svg>
<svg class="r" style="left:1455px;top:463px;" width="13" height="13" viewBox="0 0 13 13"><rect x="0.5" y="0.5" width="12" height="12" fill="#fff" stroke="#8a8d96" stroke-width="1"/><rect x="1.5" y="1.5" width="10" height="10" fill="none" stroke="#dcdee5" stroke-width="1"/></svg>
<div class="t" style="left:1503.5px;top:464.05px;font-size:11px;line-height:12.639px;color:#1e1e1e;letter-spacing:0px;">45.3 kg</div>
<div class="t" style="left:1219px;width:400px;text-align:right;top:464.05px;font-size:11px;line-height:12.639px;color:#1e1e1e;">0</div>
<svg class="r" style="left:444px;top:467px;" width="5" height="9" viewBox="0 0 5 9"><path d="M0 0 L4.2 4 L0 8 Z" fill="#111"/></svg>
<div class="r" style="left:438px;top:481px;width:15px;height:20px;background:#f3f3f6;"></div>
<div class="r" style="left:438px;top:501px;width:15px;height:1px;background:#d4d5dc;"></div>
<div class="r" style="left:453px;top:481px;width:1px;height:21px;background:#c9cad3;"></div>
<div class="r" style="left:454px;top:481px;width:1226px;height:20px;background:#dfdfdf;"></div>
<div class="r" style="left:454px;top:501px;width:1226px;height:1px;background:#d4d5dc;"></div>
<div class="r" style="left:1500px;top:481px;width:73px;height:20px;background:#add8e6;"></div>
<div class="r" style="left:1574px;top:481px;width:48px;height:20px;background:#add8e6;"></div>
<div class="r" style="left:647px;top:481px;width:1px;height:20px;background:#d4d5dc;"></div>
<div class="r" style="left:888px;top:481px;width:1px;height:20px;background:#d4d5dc;"></div>
<div class="r" style="left:956px;top:481px;width:1px;height:20px;background:#d4d5dc;"></div>
<div class="r" style="left:1017px;top:481px;width:1px;height:20px;background:#d4d5dc;"></div>
<div class="r" style="left:1078px;top:481px;width:1px;height:20px;background:#d4d5dc;"></div>
<div class="r" style="left:1155px;top:481px;width:1px;height:20px;background:#d4d5dc;"></div>
<div class="r" style="left:1221px;top:481px;width:1px;height:20px;background:#d4d5dc;"></div>
<div class="r" style="left:1294px;top:481px;width:1px;height:20px;background:#d4d5dc;"></div>
<div class="r" style="left:1368px;top:481px;width:1px;height:20px;background:#d4d5dc;"></div>
<div class="r" style="left:1423px;top:481px;width:1px;height:20px;background:#d4d5dc;"></div>
<div class="r" style="left:1499px;top:481px;width:1px;height:20px;background:#d4d5dc;"></div>
<div class="r" style="left:1573px;top:481px;width:1px;height:20px;background:#d4d5dc;"></div>
<div class="r" style="left:1622px;top:481px;width:1px;height:20px;background:#d4d5dc;"></div>
<svg class="r" style="left:456px;top:486px;" width="9" height="9" viewBox="0 0 9 9"><rect x="0.5" y="0.5" width="8" height="8" fill="none" stroke="#151525" stroke-width="1"/><path d="M2 4.5 L7 4.5" stroke="#151525" stroke-width="1"/></svg>
<div class="t" style="left:471.5px;top:485.05px;font-size:11px;line-height:12.639px;color:#1e1e1e;letter-spacing:-0.3px;">SCRAP_S275JR 2000x1000</div>
<div class="t" style="left:651.5px;top:485.05px;font-size:11px;line-height:12.639px;color:#1e1e1e;letter-spacing:-0.4px;">S275JR-15-2000x1000_TFFTGWRT_SCR</div>
<div class="t" style="left:892.5px;top:485.05px;font-size:11px;line-height:12.639px;color:#1e1e1e;letter-spacing:-0.3px;">S275JR</div>
<div class="t" style="left:960.5px;top:485.05px;font-size:11px;line-height:12.639px;color:#1e1e1e;letter-spacing:-0.3px;">2000 mm</div>
<div class="t" style="left:1021.5px;top:485.05px;font-size:11px;line-height:12.639px;color:#1e1e1e;letter-spacing:-0.3px;">1000 mm</div>
<div class="t" style="left:1082.5px;top:485.05px;font-size:11px;line-height:12.639px;color:#1e1e1e;letter-spacing:-0.3px;">15 mm</div>
<div class="t" style="left:818px;width:400px;text-align:right;top:485.05px;font-size:11px;line-height:12.639px;color:#108010;font-weight:bold;">1</div>
<div class="t" style="left:891px;width:400px;text-align:right;top:485.05px;font-size:11px;line-height:12.639px;color:#111;font-weight:bold;">0</div>
<div class="t" style="left:965px;width:400px;text-align:right;top:485.05px;font-size:11px;line-height:12.639px;color:#111;font-weight:bold;">1</div>
<svg class="r" style="left:1390px;top:484px;" width="13" height="13" viewBox="0 0 13 13"><rect x="0.5" y="0.5" width="12" height="12" fill="#fff" stroke="#8a8d96" stroke-width="1"/><rect x="1.5" y="1.5" width="10" height="10" fill="none" stroke="#dcdee5" stroke-width="1"/><path d="M1.9 6.3 L5.4 11.2 L12.4 -0.8" fill="none" stroke="#1a1622" stroke-width="1.5"/></svg>
<svg class="r" style="left:1455px;top:484px;" width="13" height="13" viewBox="0 0 13 13"><rect x="0.5" y="0.5" width="12" height="12" fill="#fff" stroke="#8a8d96" stroke-width="1"/><rect x="1.5" y="1.5" width="10" height="10" fill="none" stroke="#dcdee5" stroke-width="1"/></svg>
<div class="t" style="left:1503.5px;top:485.05px;font-size:11px;line-height:12.639px;color:#1e1e1e;letter-spacing:0px;">66.8 kg</div>
<div class="t" style="left:1219px;width:400px;text-align:right;top:485.05px;font-size:11px;line-height:12.639px;color:#1e1e1e;">0</div>
<div class="r" style="left:438px;top:502px;width:15px;height:42px;background:#f3f3f6;"></div>
<div class="r" style="left:438px;top:544px;width:15px;height:1px;background:#d4d5dc;"></div>
<div class="r" style="left:453px;top:502px;width:1px;height:43px;background:#c9cad3;"></div>
<div class="r" style="left:454px;top:502px;width:21px;height:42px;background:#dfdfdf;"></div>
<div class="r" style="left:475px;top:502px;width:1205px;height:43px;background:#ffffff;border:1px solid #9a9eab;border-right:none;box-sizing:border-box;"></div>
<div class="r" style="left:476px;top:503px;width:1204px;height:19px;background:linear-gradient(#f7f7f9,#efeff3);"></div>
<div class="r" style="left:476px;top:522px;width:1204px;height:1px;background:#c9cad3;"></div>
<div class="r" style="left:476px;top:523px;width:15px;height:21px;background:#f3f3f6;"></div>
<div class="r" style="left:491px;top:503px;width:1px;height:41px;background:#c9cad3;"></div>
<div class="r" style="left:622px;top:503px;width:1px;height:41px;background:#d4d5dc;"></div>
<div class="r" style="left:753px;top:503px;width:1px;height:41px;background:#d4d5dc;"></div>
<div class="r" style="left:884px;top:503px;width:1px;height:41px;background:#d4d5dc;"></div>
<div class="r" style="left:1015px;top:503px;width:1px;height:41px;background:#d4d5dc;"></div>
<div class="r" style="left:1146px;top:503px;width:1px;height:41px;background:#d4d5dc;"></div>
<div class="r" style="left:1277px;top:503px;width:1px;height:41px;background:#d4d5dc;"></div>
<div class="r" style="left:1408px;top:503px;width:1px;height:41px;background:#d4d5dc;"></div>
<div class="r" style="left:1539px;top:503px;width:1px;height:41px;background:#d4d5dc;"></div>
<div class="r" style="left:476px;top:544px;width:1204px;height:1px;background:#9a9eab;"></div>
<div class="r" style="left:1679px;top:502px;width:1px;height:43px;background:#9a9eab;"></div>
<div class="t" style="left:495.5px;top:506.05px;font-size:11px;line-height:12.639px;color:#1e2030;letter-spacing:-0.2px;">Group</div>
<div class="t" style="left:626.5px;top:506.05px;font-size:11px;line-height:12.639px;color:#1e2030;letter-spacing:-0.2px;">Locations</div>
<div class="t" style="left:757.5px;top:506.05px;font-size:11px;line-height:12.639px;color:#1e2030;letter-spacing:-0.2px;">Quantity</div>
<div class="t" style="left:888.5px;top:506.05px;font-size:11px;line-height:12.639px;color:#1e2030;letter-spacing:-0.2px;">Engaged</div>
<div class="t" style="left:1019.5px;top:506.05px;font-size:11px;line-height:12.639px;color:#1e2030;letter-spacing:-0.2px;">Available</div>
<div class="t" style="left:1150.5px;top:506.05px;font-size:11px;line-height:12.639px;color:#1e2030;letter-spacing:-0.2px;">Scrap</div>
<div class="t" style="left:1281.5px;top:506.05px;font-size:11px;line-height:12.639px;color:#1e2030;letter-spacing:-0.2px;">Note</div>
<div class="t" style="left:1412.5px;top:506.05px;font-size:11px;line-height:12.639px;color:#1e2030;letter-spacing:-0.2px;">Weight</div>
<div class="t" style="left:1543.5px;top:506.05px;font-size:11px;line-height:12.639px;color:#1e2030;letter-spacing:-0.2px;">Cost</div>
<svg class="r" style="left:479px;top:508px;" width="9" height="9" viewBox="0 0 9 9"><circle cx="3.5" cy="3.5" r="2.5" fill="none" stroke="#333" stroke-width="1.2"/><path d="M5.3 5.3 L8.3 8.3" stroke="#333" stroke-width="1.5"/></svg>
<svg class="r" style="left:609px;top:511px;" width="8" height="4" viewBox="0 0 8 4"><path d="M0 4 L3.8 0 L7.6 4 Z" fill="#222"/></svg>
<svg class="r" style="left:482px;top:529px;" width="5" height="9" viewBox="0 0 5 9"><path d="M0 0 L4.2 4 L0 8 Z" fill="#111"/></svg>
<div class="t" style="left:495.5px;top:527.04px;font-size:11px;line-height:12.639px;color:#1e1e1e;letter-spacing:-0.3px;">Cert-01</div>
<div class="t" style="left:626.5px;top:527.04px;font-size:11px;line-height:12.639px;color:#1e1e1e;letter-spacing:-0.3px;">Default Location</div>
<div class="t" style="left:481px;width:400px;text-align:right;top:527.04px;font-size:11px;line-height:12.639px;color:#1e1e1e;">1</div>
<div class="t" style="left:612px;width:400px;text-align:right;top:527.04px;font-size:11px;line-height:12.639px;color:#1e1e1e;">0</div>
<div class="t" style="left:743px;width:400px;text-align:right;top:527.04px;font-size:11px;line-height:12.639px;color:#1e1e1e;">1</div>
<svg class="r" style="left:1206px;top:526px;" width="13" height="13" viewBox="0 0 13 13"><rect x="0.5" y="0.5" width="12" height="12" fill="#fff" stroke="#8a8d96" stroke-width="1"/><rect x="1.5" y="1.5" width="10" height="10" fill="none" stroke="#dcdee5" stroke-width="1"/><path d="M1.9 6.3 L5.4 11.2 L12.4 -0.8" fill="none" stroke="#1a1622" stroke-width="1.5"/></svg>
<div class="t" style="left:1412.5px;top:527.04px;font-size:11px;line-height:12.639px;color:#1e1e1e;letter-spacing:0px;">66.8 kg</div>
<div class="t" style="left:1276px;width:400px;text-align:right;top:527.04px;font-size:11px;line-height:12.639px;color:#1e1e1e;">0</div>
<div class="r" style="left:438px;top:545px;width:15px;height:20px;background:#f3f3f6;"></div>
<div class="r" style="left:438px;top:565px;width:15px;height:1px;background:#d4d5dc;"></div>
<div class="r" style="left:453px;top:545px;width:1px;height:21px;background:#c9cad3;"></div>
<div class="r" style="left:454px;top:545px;width:1226px;height:20px;background:#ffffff;"></div>
<div class="r" style="left:454px;top:565px;width:1226px;height:1px;background:#d4d5dc;"></div>
<div class="r" style="left:1500px;top:545px;width:73px;height:20px;background:#add8e6;"></div>
<div class="r" style="left:1574px;top:545px;width:48px;height:20px;background:#add8e6;"></div>
<div class="r" style="left:647px;top:545px;width:1px;height:20px;background:#d4d5dc;"></div>
<div class="r" style="left:888px;top:545px;width:1px;height:20px;background:#d4d5dc;"></div>
<div class="r" style="left:956px;top:545px;width:1px;height:20px;background:#d4d5dc;"></div>
<div class="r" style="left:1017px;top:545px;width:1px;height:20px;background:#d4d5dc;"></div>
<div class="r" style="left:1078px;top:545px;width:1px;height:20px;background:#d4d5dc;"></div>
<div class="r" style="left:1155px;top:545px;width:1px;height:20px;background:#d4d5dc;"></div>
<div class="r" style="left:1221px;top:545px;width:1px;height:20px;background:#d4d5dc;"></div>
<div class="r" style="left:1294px;top:545px;width:1px;height:20px;background:#d4d5dc;"></div>
<div class="r" style="left:1368px;top:545px;width:1px;height:20px;background:#d4d5dc;"></div>
<div class="r" style="left:1423px;top:545px;width:1px;height:20px;background:#d4d5dc;"></div>
<div class="r" style="left:1499px;top:545px;width:1px;height:20px;background:#d4d5dc;"></div>
<div class="r" style="left:1573px;top:545px;width:1px;height:20px;background:#d4d5dc;"></div>
<div class="r" style="left:1622px;top:545px;width:1px;height:20px;background:#d4d5dc;"></div>
<svg class="r" style="left:456px;top:550px;" width="9" height="9" viewBox="0 0 9 9"><rect x="0.5" y="0.5" width="8" height="8" fill="none" stroke="#151525" stroke-width="1"/><path d="M2 4.5 L7 4.5" stroke="#151525" stroke-width="1"/></svg>
<div class="t" style="left:471.5px;top:549.04px;font-size:11px;line-height:12.639px;color:#1e1e1e;letter-spacing:-0.3px;">SCRAP_FE 4000x2000</div>
<div class="t" style="left:651.5px;top:549.04px;font-size:11px;line-height:12.639px;color:#1e1e1e;letter-spacing:-0.4px;">FE-4-4000x2000_DPUVEOWM_SCR</div>
<div class="t" style="left:892.5px;top:549.04px;font-size:11px;line-height:12.639px;color:#1e1e1e;letter-spacing:-0.3px;">FE</div>
<div class="t" style="left:960.5px;top:549.04px;font-size:11px;line-height:12.639px;color:#1e1e1e;letter-spacing:-0.3px;">4000 mm</div>
<div class="t" style="left:1021.5px;top:549.04px;font-size:11px;line-height:12.639px;color:#1e1e1e;letter-spacing:-0.3px;">2000 mm</div>
<div class="t" style="left:1082.5px;top:549.04px;font-size:11px;line-height:12.639px;color:#1e1e1e;letter-spacing:-0.3px;">4 mm</div>
<div class="t" style="left:818px;width:400px;text-align:right;top:549.04px;font-size:11px;line-height:12.639px;color:#108010;font-weight:bold;">1</div>
<div class="t" style="left:891px;width:400px;text-align:right;top:549.04px;font-size:11px;line-height:12.639px;color:#111;font-weight:bold;">0</div>
<div class="t" style="left:965px;width:400px;text-align:right;top:549.04px;font-size:11px;line-height:12.639px;color:#111;font-weight:bold;">1</div>
<svg class="r" style="left:1390px;top:548px;" width="13" height="13" viewBox="0 0 13 13"><rect x="0.5" y="0.5" width="12" height="12" fill="#fff" stroke="#8a8d96" stroke-width="1"/><rect x="1.5" y="1.5" width="10" height="10" fill="none" stroke="#dcdee5" stroke-width="1"/><path d="M1.9 6.3 L5.4 11.2 L12.4 -0.8" fill="none" stroke="#1a1622" stroke-width="1.5"/></svg>
<svg class="r" style="left:1455px;top:548px;" width="13" height="13" viewBox="0 0 13 13"><rect x="0.5" y="0.5" width="12" height="12" fill="#fff" stroke="#8a8d96" stroke-width="1"/><rect x="1.5" y="1.5" width="10" height="10" fill="none" stroke="#dcdee5" stroke-width="1"/></svg>
<div class="t" style="left:1503.5px;top:549.04px;font-size:11px;line-height:12.639px;color:#1e1e1e;letter-spacing:0px;">233.63 kg</div>
<div class="t" style="left:1219px;width:400px;text-align:right;top:549.04px;font-size:11px;line-height:12.639px;color:#1e1e1e;">0</div>
<div class="r" style="left:438px;top:566px;width:15px;height:42px;background:#f3f3f6;"></div>
<div class="r" style="left:438px;top:608px;width:15px;height:1px;background:#d4d5dc;"></div>
<div class="r" style="left:453px;top:566px;width:1px;height:43px;background:#c9cad3;"></div>
<div class="r" style="left:454px;top:566px;width:21px;height:42px;background:#ffffff;"></div>
<div class="r" style="left:475px;top:566px;width:1205px;height:43px;background:#ffffff;border:1px solid #9a9eab;border-right:none;box-sizing:border-box;"></div>
<div class="r" style="left:476px;top:567px;width:1204px;height:19px;background:linear-gradient(#f7f7f9,#efeff3);"></div>
<div class="r" style="left:476px;top:586px;width:1204px;height:1px;background:#c9cad3;"></div>
<div class="r" style="left:476px;top:587px;width:15px;height:21px;background:#f3f3f6;"></div>
<div class="r" style="left:491px;top:567px;width:1px;height:41px;background:#c9cad3;"></div>
<div class="r" style="left:622px;top:567px;width:1px;height:41px;background:#d4d5dc;"></div>
<div class="r" style="left:753px;top:567px;width:1px;height:41px;background:#d4d5dc;"></div>
<div class="r" style="left:884px;top:567px;width:1px;height:41px;background:#d4d5dc;"></div>
<div class="r" style="left:1015px;top:567px;width:1px;height:41px;background:#d4d5dc;"></div>
<div class="r" style="left:1146px;top:567px;width:1px;height:41px;background:#d4d5dc;"></div>
<div class="r" style="left:1277px;top:567px;width:1px;height:41px;background:#d4d5dc;"></div>
<div class="r" style="left:1408px;top:567px;width:1px;height:41px;background:#d4d5dc;"></div>
<div class="r" style="left:1539px;top:567px;width:1px;height:41px;background:#d4d5dc;"></div>
<div class="r" style="left:476px;top:608px;width:1204px;height:1px;background:#9a9eab;"></div>
<div class="r" style="left:1679px;top:566px;width:1px;height:43px;background:#9a9eab;"></div>
<div class="t" style="left:495.5px;top:570.04px;font-size:11px;line-height:12.639px;color:#1e2030;letter-spacing:-0.2px;">Group</div>
<div class="t" style="left:626.5px;top:570.04px;font-size:11px;line-height:12.639px;color:#1e2030;letter-spacing:-0.2px;">Locations</div>
<div class="t" style="left:757.5px;top:570.04px;font-size:11px;line-height:12.639px;color:#1e2030;letter-spacing:-0.2px;">Quantity</div>
<div class="t" style="left:888.5px;top:570.04px;font-size:11px;line-height:12.639px;color:#1e2030;letter-spacing:-0.2px;">Engaged</div>
<div class="t" style="left:1019.5px;top:570.04px;font-size:11px;line-height:12.639px;color:#1e2030;letter-spacing:-0.2px;">Available</div>
<div class="t" style="left:1150.5px;top:570.04px;font-size:11px;line-height:12.639px;color:#1e2030;letter-spacing:-0.2px;">Scrap</div>
<div class="t" style="left:1281.5px;top:570.04px;font-size:11px;line-height:12.639px;color:#1e2030;letter-spacing:-0.2px;">Note</div>
<div class="t" style="left:1412.5px;top:570.04px;font-size:11px;line-height:12.639px;color:#1e2030;letter-spacing:-0.2px;">Weight</div>
<div class="t" style="left:1543.5px;top:570.04px;font-size:11px;line-height:12.639px;color:#1e2030;letter-spacing:-0.2px;">Cost</div>
<svg class="r" style="left:479px;top:572px;" width="9" height="9" viewBox="0 0 9 9"><circle cx="3.5" cy="3.5" r="2.5" fill="none" stroke="#333" stroke-width="1.2"/><path d="M5.3 5.3 L8.3 8.3" stroke="#333" stroke-width="1.5"/></svg>
<svg class="r" style="left:609px;top:575px;" width="8" height="4" viewBox="0 0 8 4"><path d="M0 4 L3.8 0 L7.6 4 Z" fill="#222"/></svg>
<svg class="r" style="left:482px;top:593px;" width="5" height="9" viewBox="0 0 5 9"><path d="M0 0 L4.2 4 L0 8 Z" fill="#111"/></svg>
<div class="t" style="left:495.5px;top:591.04px;font-size:11px;line-height:12.639px;color:#1e1e1e;letter-spacing:-0.3px;">Cert234</div>
<div class="t" style="left:626.5px;top:591.04px;font-size:11px;line-height:12.639px;color:#1e1e1e;letter-spacing:-0.3px;">Default Location</div>
<div class="t" style="left:481px;width:400px;text-align:right;top:591.04px;font-size:11px;line-height:12.639px;color:#1e1e1e;">1</div>
<div class="t" style="left:612px;width:400px;text-align:right;top:591.04px;font-size:11px;line-height:12.639px;color:#1e1e1e;">0</div>
<div class="t" style="left:743px;width:400px;text-align:right;top:591.04px;font-size:11px;line-height:12.639px;color:#1e1e1e;">1</div>
<svg class="r" style="left:1206px;top:590px;" width="13" height="13" viewBox="0 0 13 13"><rect x="0.5" y="0.5" width="12" height="12" fill="#fff" stroke="#8a8d96" stroke-width="1"/><rect x="1.5" y="1.5" width="10" height="10" fill="none" stroke="#dcdee5" stroke-width="1"/><path d="M1.9 6.3 L5.4 11.2 L12.4 -0.8" fill="none" stroke="#1a1622" stroke-width="1.5"/></svg>
<div class="t" style="left:1412.5px;top:591.04px;font-size:11px;line-height:12.639px;color:#1e1e1e;letter-spacing:0px;">233.63 kg</div>
<div class="t" style="left:1276px;width:400px;text-align:right;top:591.04px;font-size:11px;line-height:12.639px;color:#1e1e1e;">0</div>
<div class="r" style="left:438px;top:609px;width:15px;height:20px;background:#f3f3f6;"></div>
<div class="r" style="left:438px;top:629px;width:15px;height:1px;background:#d4d5dc;"></div>
<div class="r" style="left:453px;top:609px;width:1px;height:21px;background:#c9cad3;"></div>
<div class="r" style="left:454px;top:609px;width:1226px;height:20px;background:#dfdfdf;"></div>
<div class="r" style="left:454px;top:629px;width:1226px;height:1px;background:#d4d5dc;"></div>
<div class="r" style="left:1500px;top:609px;width:73px;height:20px;background:#add8e6;"></div>
<div class="r" style="left:1574px;top:609px;width:48px;height:20px;background:#add8e6;"></div>
<div class="r" style="left:647px;top:609px;width:1px;height:20px;background:#d4d5dc;"></div>
<div class="r" style="left:888px;top:609px;width:1px;height:20px;background:#d4d5dc;"></div>
<div class="r" style="left:956px;top:609px;width:1px;height:20px;background:#d4d5dc;"></div>
<div class="r" style="left:1017px;top:609px;width:1px;height:20px;background:#d4d5dc;"></div>
<div class="r" style="left:1078px;top:609px;width:1px;height:20px;background:#d4d5dc;"></div>
<div class="r" style="left:1155px;top:609px;width:1px;height:20px;background:#d4d5dc;"></div>
<div class="r" style="left:1221px;top:609px;width:1px;height:20px;background:#d4d5dc;"></div>
<div class="r" style="left:1294px;top:609px;width:1px;height:20px;background:#d4d5dc;"></div>
<div class="r" style="left:1368px;top:609px;width:1px;height:20px;background:#d4d5dc;"></div>
<div class="r" style="left:1423px;top:609px;width:1px;height:20px;background:#d4d5dc;"></div>
<div class="r" style="left:1499px;top:609px;width:1px;height:20px;background:#d4d5dc;"></div>
<div class="r" style="left:1573px;top:609px;width:1px;height:20px;background:#d4d5dc;"></div>
<div class="r" style="left:1622px;top:609px;width:1px;height:20px;background:#d4d5dc;"></div>
<svg class="r" style="left:456px;top:614px;" width="9" height="9" viewBox="0 0 9 9"><rect x="0.5" y="0.5" width="8" height="8" fill="none" stroke="#151525" stroke-width="1"/><path d="M2 4.5 L7 4.5" stroke="#151525" stroke-width="1"/><path d="M4.5 2 L4.5 7" stroke="#151525" stroke-width="1"/></svg>
<div class="t" style="left:471.5px;top:613.04px;font-size:11px;line-height:12.639px;color:#1e1e1e;letter-spacing:-0.3px;">SCRAP_FE1 3000 x 1500</div>
<div class="t" style="left:651.5px;top:613.04px;font-size:11px;line-height:12.639px;color:#1e1e1e;letter-spacing:-0.4px;">_TZVCGMEP_SCR0</div>
<div class="t" style="left:892.5px;top:613.04px;font-size:11px;line-height:12.639px;color:#1e1e1e;letter-spacing:-0.3px;">FE</div>
<div class="t" style="left:960.5px;top:613.04px;font-size:11px;line-height:12.639px;color:#1e1e1e;letter-spacing:-0.3px;">3000 mm</div>
<div class="t" style="left:1021.5px;top:613.04px;font-size:11px;line-height:12.639px;color:#1e1e1e;letter-spacing:-0.3px;">1500 mm</div>
<div class="t" style="left:1082.5px;top:613.04px;font-size:11px;line-height:12.639px;color:#1e1e1e;letter-spacing:-0.3px;">1 mm</div>
<div class="t" style="left:818px;width:400px;text-align:right;top:613.04px;font-size:11px;line-height:12.639px;color:#108010;font-weight:bold;">1</div>
<div class="t" style="left:891px;width:400px;text-align:right;top:613.04px;font-size:11px;line-height:12.639px;color:#111;font-weight:bold;">0</div>
<div class="t" style="left:965px;width:400px;text-align:right;top:613.04px;font-size:11px;line-height:12.639px;color:#111;font-weight:bold;">1</div>
<svg class="r" style="left:1390px;top:612px;" width="13" height="13" viewBox="0 0 13 13"><rect x="0.5" y="0.5" width="12" height="12" fill="#fff" stroke="#8a8d96" stroke-width="1"/><rect x="1.5" y="1.5" width="10" height="10" fill="none" stroke="#dcdee5" stroke-width="1"/><path d="M1.9 6.3 L5.4 11.2 L12.4 -0.8" fill="none" stroke="#1a1622" stroke-width="1.5"/></svg>
<svg class="r" style="left:1455px;top:612px;" width="13" height="13" viewBox="0 0 13 13"><rect x="0.5" y="0.5" width="12" height="12" fill="#fff" stroke="#8a8d96" stroke-width="1"/><rect x="1.5" y="1.5" width="10" height="10" fill="none" stroke="#dcdee5" stroke-width="1"/></svg>
<div class="t" style="left:1503.5px;top:613.04px;font-size:11px;line-height:12.639px;color:#1e1e1e;letter-spacing:0px;">27.47 kg</div>
<div class="t" style="left:1219px;width:400px;text-align:right;top:613.04px;font-size:11px;line-height:12.639px;color:#1e1e1e;">0</div>
<div class="r" style="left:438px;top:630px;width:15px;height:20px;background:#f3f3f6;"></div>
<div class="r" style="left:438px;top:650px;width:15px;height:1px;background:#d4d5dc;"></div>
<div class="r" style="left:453px;top:630px;width:1px;height:21px;background:#c9cad3;"></div>
<div class="r" style="left:454px;top:630px;width:1226px;height:20px;background:#ffffff;"></div>
<div class="r" style="left:454px;top:650px;width:1226px;height:1px;background:#d4d5dc;"></div>
<div class="r" style="left:1500px;top:630px;width:73px;height:20px;background:#add8e6;"></div>
<div class="r" style="left:1574px;top:630px;width:48px;height:20px;background:#add8e6;"></div>
<div class="r" style="left:647px;top:630px;width:1px;height:20px;background:#d4d5dc;"></div>
<div class="r" style="left:888px;top:630px;width:1px;height:20px;background:#d4d5dc;"></div>
<div class="r" style="left:956px;top:630px;width:1px;height:20px;background:#d4d5dc;"></div>
<div class="r" style="left:1017px;top:630px;width:1px;height:20px;background:#d4d5dc;"></div>
<div class="r" style="left:1078px;top:630px;width:1px;height:20px;background:#d4d5dc;"></div>
<div class="r" style="left:1155px;top:630px;width:1px;height:20px;background:#d4d5dc;"></div>
<div class="r" style="left:1221px;top:630px;width:1px;height:20px;background:#d4d5dc;"></div>
<div class="r" style="left:1294px;top:630px;width:1px;height:20px;background:#d4d5dc;"></div>
<div class="r" style="left:1368px;top:630px;width:1px;height:20px;background:#d4d5dc;"></div>
<div class="r" style="left:1423px;top:630px;width:1px;height:20px;background:#d4d5dc;"></div>
<div class="r" style="left:1499px;top:630px;width:1px;height:20px;background:#d4d5dc;"></div>
<div class="r" style="left:1573px;top:630px;width:1px;height:20px;background:#d4d5dc;"></div>
<div class="r" style="left:1622px;top:630px;width:1px;height:20px;background:#d4d5dc;"></div>
<svg class="r" style="left:456px;top:635px;" width="9" height="9" viewBox="0 0 9 9"><rect x="0.5" y="0.5" width="8" height="8" fill="none" stroke="#151525" stroke-width="1"/><path d="M2 4.5 L7 4.5" stroke="#151525" stroke-width="1"/><path d="M4.5 2 L4.5 7" stroke="#151525" stroke-width="1"/></svg>
<div class="t" style="left:471.5px;top:634.04px;font-size:11px;line-height:12.639px;color:#1e1e1e;letter-spacing:-0.3px;">SCRAP_FE1 3000 x 1500</div>
<div class="t" style="left:651.5px;top:634.04px;font-size:11px;line-height:12.639px;color:#1e1e1e;letter-spacing:-0.4px;">_BJFKPPEI_SCR0</div>
<div class="t" style="left:892.5px;top:634.04px;font-size:11px;line-height:12.639px;color:#1e1e1e;letter-spacing:-0.3px;">FE</div>
<div class="t" style="left:960.5px;top:634.04px;font-size:11px;line-height:12.639px;color:#1e1e1e;letter-spacing:-0.3px;">3000 mm</div>
<div class="t" style="left:1021.5px;top:634.04px;font-size:11px;line-height:12.639px;color:#1e1e1e;letter-spacing:-0.3px;">1500 mm</div>
<div class="t" style="left:1082.5px;top:634.04px;font-size:11px;line-height:12.639px;color:#1e1e1e;letter-spacing:-0.3px;">1 mm</div>
<div class="t" style="left:818px;width:400px;text-align:right;top:634.04px;font-size:11px;line-height:12.639px;color:#108010;font-weight:bold;">1</div>
<div class="t" style="left:891px;width:400px;text-align:right;top:634.04px;font-size:11px;line-height:12.639px;color:#111;font-weight:bold;">0</div>
<div class="t" style="left:965px;width:400px;text-align:right;top:634.04px;font-size:11px;line-height:12.639px;color:#111;font-weight:bold;">1</div>
<svg class="r" style="left:1390px;top:633px;" width="13" height="13" viewBox="0 0 13 13"><rect x="0.5" y="0.5" width="12" height="12" fill="#fff" stroke="#8a8d96" stroke-width="1"/><rect x="1.5" y="1.5" width="10" height="10" fill="none" stroke="#dcdee5" stroke-width="1"/><path d="M1.9 6.3 L5.4 11.2 L12.4 -0.8" fill="none" stroke="#1a1622" stroke-width="1.5"/></svg>
<svg class="r" style="left:1455px;top:633px;" width="13" height="13" viewBox="0 0 13 13"><rect x="0.5" y="0.5" width="12" height="12" fill="#fff" stroke="#8a8d96" stroke-width="1"/><rect x="1.5" y="1.5" width="10" height="10" fill="none" stroke="#dcdee5" stroke-width="1"/></svg>
<div class="t" style="left:1503.5px;top:634.04px;font-size:11px;line-height:12.639px;color:#1e1e1e;letter-spacing:0px;">22.63 kg</div>
<div class="t" style="left:1219px;width:400px;text-align:right;top:634.04px;font-size:11px;line-height:12.639px;color:#1e1e1e;">0</div>
<div class="t" style="left:1276.5px;width:400px;text-align:right;top:703.04px;font-size:11px;line-height:12.639px;color:#1e1e1e;letter-spacing:0.3px;"># 15/98</div>
<div class="r" style="left:3px;top:986px;width:1682px;height:1px;background:#b4b4b4;"></div>
<div class="r" style="left:3px;top:987px;width:1682px;height:2px;background:#ececee;"></div>
<div class="r" style="left:433px;top:727px;width:1252px;height:259px;background:#ffffff;border:1px solid #6a6a6a;box-sizing:border-box;"></div>
<div class="t" style="left:441.5px;top:735.26px;font-size:18.5px;line-height:21.256px;color:#1c6fc2;">Load Sheets</div>
<div class="r" style="left:437px;top:765px;width:1244px;height:175px;background:#ffffff;border:1px solid #9a9eab;box-sizing:border-box;"></div>
<div class="r" style="left:438px;top:766px;width:1242px;height:19px;background:linear-gradient(#f7f7f9,#efeff3);"></div>
<div class="r" style="left:438px;top:785px;width:1242px;height:1px;background:#c9cad3;"></div>
<div class="r" style="left:453px;top:766px;width:1px;height:40px;background:#c9cad3;"></div>
<div class="t" style="left:457.5px;top:769.04px;font-size:11px;line-height:12.639px;color:#1e2030;letter-spacing:-0.2px;">Format</div>
<div class="r" style="left:606px;top:766px;width:1px;height:40px;background:#d4d5dc;"></div>
<div class="t" style="left:610.5px;top:769.04px;font-size:11px;line-height:12.639px;color:#1e2030;letter-spacing:-0.2px;">Group</div>
<div class="r" style="left:759px;top:766px;width:1px;height:40px;background:#d4d5dc;"></div>
<div class="t" style="left:763.5px;top:769.04px;font-size:11px;line-height:12.639px;color:#1e2030;letter-spacing:-0.2px;">Quantity</div>
<div class="r" style="left:912px;top:766px;width:1px;height:40px;background:#d4d5dc;"></div>
<div class="t" style="left:916.5px;top:769.04px;font-size:11px;line-height:12.639px;color:#1e2030;letter-spacing:-0.2px;">Price</div>
<div class="r" style="left:1065px;top:766px;width:1px;height:40px;background:#d4d5dc;"></div>
<div class="t" style="left:1069.5px;top:769.04px;font-size:11px;line-height:12.639px;color:#1e2030;letter-spacing:-0.2px;">Devaluation</div>
<div class="r" style="left:1218px;top:766px;width:1px;height:40px;background:#d4d5dc;"></div>
<div class="t" style="left:1222.5px;top:769.04px;font-size:11px;line-height:12.639px;color:#1e2030;letter-spacing:-0.2px;">Location</div>
<div class="r" style="left:1371px;top:766px;width:1px;height:40px;background:#d4d5dc;"></div>
<div class="t" style="left:1375.5px;top:769.04px;font-size:11px;line-height:12.639px;color:#1e2030;letter-spacing:-0.2px;">Documents</div>
<div class="r" style="left:1524px;top:766px;width:1px;height:40px;background:#d4d5dc;"></div>
<div class="t" style="left:1528.5px;top:769.04px;font-size:11px;line-height:12.639px;color:#1e2030;letter-spacing:-0.2px;">Note</div>
<div class="r" style="left:438px;top:786px;width:15px;height:20px;background:#f3f3f6;"></div>
<div class="r" style="left:454px;top:786px;width:152px;height:20px;background:#ffffff;"></div>
<div class="r" style="left:607px;top:786px;width:1073px;height:20px;background:#ececef;"></div>
<div class="r" style="left:606px;top:786px;width:1px;height:20px;background:#d4d5dc;"></div>
<div class="r" style="left:759px;top:786px;width:1px;height:20px;background:#d4d5dc;"></div>
<div class="r" style="left:912px;top:786px;width:1px;height:20px;background:#d4d5dc;"></div>
<div class="r" style="left:1065px;top:786px;width:1px;height:20px;background:#d4d5dc;"></div>
<div class="r" style="left:1218px;top:786px;width:1px;height:20px;background:#d4d5dc;"></div>
<div class="r" style="left:1371px;top:786px;width:1px;height:20px;background:#d4d5dc;"></div>
<div class="r" style="left:1524px;top:786px;width:1px;height:20px;background:#d4d5dc;"></div>
<div class="r" style="left:438px;top:806px;width:1242px;height:1px;background:#d4d5dc;"></div>
<svg class="r" style="left:443px;top:792px;" width="5" height="9" viewBox="0 0 5 9"><path d="M0 0 L4.2 4 L0 8 Z" fill="#111"/></svg>
<svg class="r" style="left:594px;top:794px;" width="7" height="4" viewBox="0 0 7 4"><path d="M0 0 L7 0 L3.5 4 Z" fill="#1a1a1a"/></svg>
<svg class="r" style="left:1493px;top:795px;" width="11" height="3" viewBox="0 0 11 3"><rect x="0" y="0" width="2" height="2" fill="#111"/><rect x="4" y="0" width="2" height="2" fill="#111"/><rect x="8" y="0" width="2" height="2" fill="#111"/></svg>
<svg class="r" style="left:1510px;top:792px;" width="10" height="8" viewBox="0 0 10 8"><path d="M1 0.8 L9 7.2 M9 0.8 L1 7.2" stroke="#1a1420" stroke-width="2.2"/></svg>
<div class="r" style="left:441px;top:950px;width:92px;height:28px;background:#f9f9fa;border:1px solid #c8c8cc;border-radius:3px;box-sizing:border-box;"></div>
<div class="t" style="left:474px;top:958.04px;font-size:11px;line-height:12.639px;color:#1e1e1e;letter-spacing:-0.2px;">Save</div>
<div class="r" style="left:541px;top:950px;width:92px;height:28px;background:#f9f9fa;border:1px solid #c8c8cc;border-radius:3px;box-sizing:border-box;"></div>
<div class="t" style="left:571px;top:958.04px;font-size:11px;line-height:12.639px;color:#1e1e1e;letter-spacing:0.15px;">Delete</div>
<div class="t" style="left:643px;top:958.54px;font-size:11px;line-height:12.639px;color:#1e1e1e;letter-spacing:-0.3px;">Select the format</div>
</body></html>
